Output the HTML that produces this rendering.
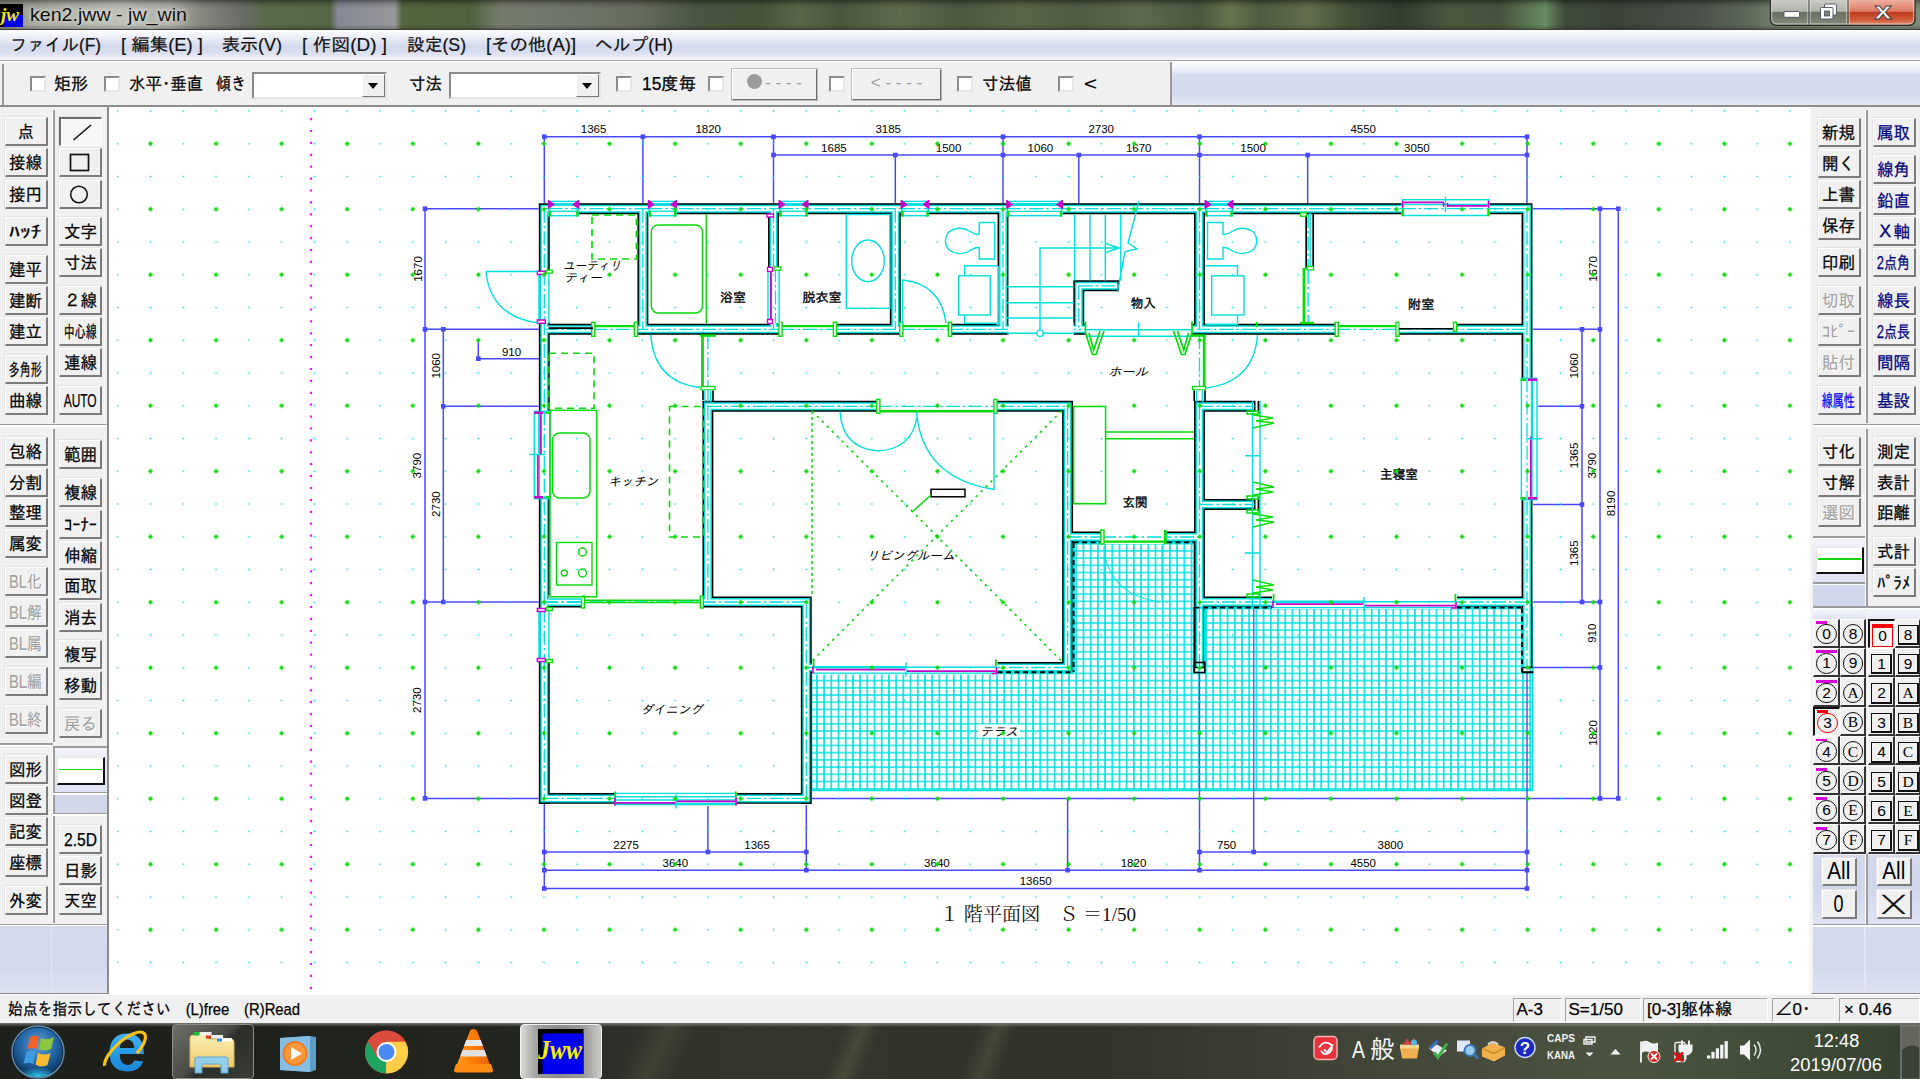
<!DOCTYPE html><html lang="ja"><head><meta charset="utf-8"><title>ken2.jww - jw_win</title><style>
*{box-sizing:border-box;margin:0;padding:0}
html,body{width:1920px;height:1079px;overflow:hidden;background:#fff}
body{position:relative;font-family:"Liberation Sans","IPAGothic","Noto Sans CJK JP",sans-serif;font-size:17px;color:#000}
.abs{position:absolute}
#title{left:0;top:0;width:1920px;height:30px;background:linear-gradient(90deg,#8e9187 0px,#a9aba2 40px,#bfc1b9 120px,#b0b2a9 170px,#85887f 200px,#6b6e69 240px,#596a4a 265px,#556846 330px,#868a96 338px,#96989a 395px,#54663f 402px,#506240 470px,#767c6c 500px,#70766a 560px,#666c5c 640px,#485540 700px,#46543a 760px,#59664a 800px,#4a573f 840px,#5e6a4e 900px,#4b5841 960px,#5a6649 1020px,#4f5b43 1080px,#5d694e 1140px,#495740 1200px,#68754f 1230px,#4e5c42 1260px,#636e4e 1310px,#435039 1350px,#323d2e 1400px,#4a5840 1450px,#46533d 1500px,#6a8a63 1545px,#3f4b3a 1565px,#3c4339 1620px,#4c524a 1700px,#5f6a5a 1750px,#6e7a66 1770px,#7f8c78 1920px)}
#title .shade{left:0;top:0;width:1920px;height:30px;background:linear-gradient(180deg,rgba(0,0,0,.42) 0%,rgba(0,0,0,.12) 14%,rgba(0,0,0,0) 30%,rgba(0,0,0,0) 82%,rgba(0,0,0,.25) 100%)}
#ttext{left:30px;top:2.5px;font-size:18.5px;line-height:24px;color:#10100f;white-space:nowrap;font-family:"Liberation Sans",sans-serif;text-shadow:0 0 6px rgba(255,255,255,.55),0 0 3px rgba(255,255,255,.5)}
#menu{left:0;top:30px;width:1920px;height:31px;background:linear-gradient(180deg,#fdfdfe 0%,#f4f5fb 14%,#dfe3f2 40%,#d3d9ec 55%,#d9deef 75%,#e8ebf5 90%,#f5f6fa 100%);border-bottom:1.5px solid #a0a0a0}
#menu span{position:absolute;top:2.5px;line-height:24px;font-size:17.5px;white-space:nowrap;color:#111;-webkit-text-stroke:.2px #111}
#ctrl{left:0;top:62px;width:1920px;height:45px;background:#f0f0f0;border-bottom:2px solid #8e8e8e}
#ctrl .lbl{position:absolute;top:11px;line-height:22px;font-size:17.5px;white-space:nowrap;-webkit-text-stroke:.25px #000}
.cb{position:absolute;width:16px;height:16px;top:14px;background:#fff;border:2px solid #8c8c8c;border-right-color:#e6e6e6;border-bottom-color:#e6e6e6}
.combo{position:absolute;top:10px;height:27px;background:#fff;border:2px solid #8a8a8a;border-right-color:#e4e4e4;border-bottom-color:#e4e4e4}
.combo i{position:absolute;right:0;top:0;width:23px;height:23px;background:#f0f0f0;border:1.5px solid #fff;border-right-color:#777;border-bottom-color:#777}
.combo i:after{content:"";position:absolute;left:5px;top:8px;border:5px solid transparent;border-top:6px solid #000;border-bottom:0}
.dbtn{position:absolute;top:7px;height:31px;background:#f0f0f0;border:1.5px solid #fff;border-right-color:#6d6d6d;border-bottom-color:#6d6d6d;box-shadow:0 0 0 1px #b9b9b9;color:#9a9a9a;font-size:17px;line-height:26px;text-align:center;white-space:nowrap}
.tb{position:absolute;background:#f0f0f0}
.b{position:absolute;width:43px;height:29px;background:#f0f0f0;border-top:1.5px solid #fff;border-left:1.5px solid #fff;border-right:2.5px solid #7b7b7b;border-bottom:2.5px solid #7b7b7b;font-size:17.5px;line-height:24px;padding-top:2px;display:flex;justify-content:center;align-items:center;white-space:nowrap;color:#000;overflow:hidden;box-shadow:-1px -1px 0 #e3e3e3;-webkit-text-stroke:.25px currentColor}
.f{display:inline-block;white-space:nowrap;transform-origin:0 50%}
.b .f{transform-origin:50% 50%}
.b.d{color:#a0a0a0;-webkit-text-stroke:.1px #a0a0a0;text-shadow:1px 1px 0 #fff}
.b.n{color:#00007c}
.b.bl{color:#0000f0}
.b.p{border-top:2.5px solid #6e6e6e;border-left:2.5px solid #6e6e6e;border-right:1.5px solid #fff;border-bottom:1.5px solid #fff;background:#f6f6f6}
.vsep{position:absolute;width:3px;background:linear-gradient(90deg,#fff 0,#fff 33%,#9c9c9c 33%,#9c9c9c 100%)}
.hsep{position:absolute;height:3px;background:linear-gradient(180deg,#9c9c9c 0,#9c9c9c 50%,#fff 50%,#fff 100%)}
.blue{position:absolute;background:linear-gradient(180deg,#d9def0 0%,#d0d6ea 60%,#dfe3f3 100%)}
#status{left:0;top:994px;width:1920px;height:29px;background:#f0f0f0;border-top:1.5px solid #fff}
#status span{position:absolute;top:4px;line-height:22px;font-size:17px;white-space:nowrap;-webkit-text-stroke:.25px #000}
#status .cell{position:absolute;top:3px;height:24px;border-left:1.5px solid #a5a5a5;border-top:1.5px solid #a5a5a5;border-right:1.5px solid #fff;border-bottom:1.5px solid #fff}
#task{left:0;top:1023px;width:1920px;height:56px;background:
 linear-gradient(115deg,rgba(90,95,70,0) 33%,rgba(90,95,70,.35) 34.5%,rgba(90,95,70,0) 36%),
 linear-gradient(112deg,rgba(95,100,72,0) 43.5%,rgba(95,100,72,.45) 44.5%,rgba(95,100,72,0) 45.5%),
 linear-gradient(110deg,rgba(95,100,72,0) 50.5%,rgba(95,100,72,.4) 51.5%,rgba(95,100,72,0) 52.5%),
 linear-gradient(90deg,#1e201b 0%,#1f211c 14%,#252721 28%,#2f322a 33%,#33372d 40%,#30342b 50%,#31352c 58%,#3b3f33 66%,#42473a 72%,#484d3d 78%,#4b5440 84%,#44503a 90%,#3b4733 96%,#36402f 100%);border-top:1.5px solid #6a6c66}
</style></head><body><div class="abs" style="left:109px;top:108px;width:1702px;height:886px;background:#fff"></div><svg class="abs" style="left:0;top:0" width="1920" height="1079" viewBox="0 0 1920 1079" font-family="Liberation Sans,sans-serif"><defs><pattern id="ht" x="542.2" y="211.4" width="7.205" height="7.205" patternUnits="userSpaceOnUse"><path d="M0 0.9H7.3M0.9 0V7.3" stroke="#00dede" stroke-width="1.55" fill="none"/></pattern></defs><path d="M1073 542.5 L1194 542.5 L1194 607.5 L1532.6 607.5 L1532.6 790.4 L811.5 790.4 L811.5 672.5 L1073 672.5Z" fill="url(#ht)" stroke="#00dede" stroke-width="1.6"/><line x1="544.3" y1="136.7" x2="1527" y2="136.7" stroke="#4848ff" stroke-width="1.5"/><line x1="773.5" y1="155" x2="1527" y2="155" stroke="#4848ff" stroke-width="1.5"/><line x1="544.3" y1="136.7" x2="544.3" y2="203" stroke="#4848ff" stroke-width="1.5"/><rect x="542" y="134.4" width="4.6" height="4.6" fill="#4848ff"/><line x1="642.9" y1="136.7" x2="642.9" y2="203" stroke="#4848ff" stroke-width="1.5"/><rect x="640.6" y="134.4" width="4.6" height="4.6" fill="#4848ff"/><line x1="773.5" y1="136.7" x2="773.5" y2="203" stroke="#4848ff" stroke-width="1.5"/><rect x="771.2" y="134.4" width="4.6" height="4.6" fill="#4848ff"/><line x1="1003" y1="136.7" x2="1003" y2="203" stroke="#4848ff" stroke-width="1.5"/><rect x="1000.7" y="134.4" width="4.6" height="4.6" fill="#4848ff"/><line x1="1199.5" y1="136.7" x2="1199.5" y2="203" stroke="#4848ff" stroke-width="1.5"/><rect x="1197.2" y="134.4" width="4.6" height="4.6" fill="#4848ff"/><line x1="1527" y1="136.7" x2="1527" y2="203" stroke="#4848ff" stroke-width="1.5"/><rect x="1524.7" y="134.4" width="4.6" height="4.6" fill="#4848ff"/><rect x="771.2" y="152.7" width="4.6" height="4.6" fill="#4848ff"/><line x1="895.3" y1="155" x2="895.3" y2="203" stroke="#4848ff" stroke-width="1.5"/><rect x="893" y="152.7" width="4.6" height="4.6" fill="#4848ff"/><rect x="1000.7" y="152.7" width="4.6" height="4.6" fill="#4848ff"/><line x1="1078.8" y1="155" x2="1078.8" y2="203" stroke="#4848ff" stroke-width="1.5"/><rect x="1076.5" y="152.7" width="4.6" height="4.6" fill="#4848ff"/><rect x="1197.2" y="152.7" width="4.6" height="4.6" fill="#4848ff"/><line x1="1307.7" y1="155" x2="1307.7" y2="203" stroke="#4848ff" stroke-width="1.5"/><rect x="1305.4" y="152.7" width="4.6" height="4.6" fill="#4848ff"/><rect x="1524.7" y="152.7" width="4.6" height="4.6" fill="#4848ff"/><text x="593.6" y="133.2" font-size="11.5" text-anchor="middle" font-family="Liberation Sans,IPAGothic,sans-serif" fill="#000">1365</text><text x="708.2" y="133.2" font-size="11.5" text-anchor="middle" font-family="Liberation Sans,IPAGothic,sans-serif" fill="#000">1820</text><text x="888.2" y="133.2" font-size="11.5" text-anchor="middle" font-family="Liberation Sans,IPAGothic,sans-serif" fill="#000">3185</text><text x="1101.2" y="133.2" font-size="11.5" text-anchor="middle" font-family="Liberation Sans,IPAGothic,sans-serif" fill="#000">2730</text><text x="1363.2" y="133.2" font-size="11.5" text-anchor="middle" font-family="Liberation Sans,IPAGothic,sans-serif" fill="#000">4550</text><text x="833.9" y="151.5" font-size="11.5" text-anchor="middle" font-family="Liberation Sans,IPAGothic,sans-serif" fill="#000">1685</text><text x="948.6" y="151.5" font-size="11.5" text-anchor="middle" font-family="Liberation Sans,IPAGothic,sans-serif" fill="#000">1500</text><text x="1040.4" y="151.5" font-size="11.5" text-anchor="middle" font-family="Liberation Sans,IPAGothic,sans-serif" fill="#000">1060</text><text x="1138.7" y="151.5" font-size="11.5" text-anchor="middle" font-family="Liberation Sans,IPAGothic,sans-serif" fill="#000">1670</text><text x="1253.1" y="151.5" font-size="11.5" text-anchor="middle" font-family="Liberation Sans,IPAGothic,sans-serif" fill="#000">1500</text><text x="1416.9" y="151.5" font-size="11.5" text-anchor="middle" font-family="Liberation Sans,IPAGothic,sans-serif" fill="#000">3050</text><line x1="425" y1="208.7" x2="425" y2="798.4" stroke="#4848ff" stroke-width="1.5"/><line x1="443.3" y1="329.3" x2="443.3" y2="602" stroke="#4848ff" stroke-width="1.5"/><line x1="425" y1="208.7" x2="538.5" y2="208.7" stroke="#4848ff" stroke-width="1.5"/><rect x="422.7" y="206.4" width="4.6" height="4.6" fill="#4848ff"/><line x1="425" y1="329.3" x2="538.5" y2="329.3" stroke="#4848ff" stroke-width="1.5"/><rect x="422.7" y="327" width="4.6" height="4.6" fill="#4848ff"/><line x1="425" y1="602" x2="538.5" y2="602" stroke="#4848ff" stroke-width="1.5"/><rect x="422.7" y="599.7" width="4.6" height="4.6" fill="#4848ff"/><line x1="425" y1="798.4" x2="538.5" y2="798.4" stroke="#4848ff" stroke-width="1.5"/><rect x="422.7" y="796.1" width="4.6" height="4.6" fill="#4848ff"/><line x1="443.3" y1="406.3" x2="538.5" y2="406.3" stroke="#4848ff" stroke-width="1.5"/><rect x="441" y="327" width="4.6" height="4.6" fill="#4848ff"/><rect x="441" y="404" width="4.6" height="4.6" fill="#4848ff"/><rect x="441" y="599.7" width="4.6" height="4.6" fill="#4848ff"/><text x="421.5" y="269" font-size="11.5" text-anchor="middle" font-family="Liberation Sans,IPAGothic,sans-serif" transform="rotate(-90 421.5 269)" fill="#000">1670</text><text x="421.5" y="465.6" font-size="11.5" text-anchor="middle" font-family="Liberation Sans,IPAGothic,sans-serif" transform="rotate(-90 421.5 465.6)" fill="#000">3790</text><text x="421.5" y="700.2" font-size="11.5" text-anchor="middle" font-family="Liberation Sans,IPAGothic,sans-serif" transform="rotate(-90 421.5 700.2)" fill="#000">2730</text><text x="439.8" y="365.8" font-size="11.5" text-anchor="middle" font-family="Liberation Sans,IPAGothic,sans-serif" transform="rotate(-90 439.8 365.8)" fill="#000">1060</text><text x="439.8" y="504.1" font-size="11.5" text-anchor="middle" font-family="Liberation Sans,IPAGothic,sans-serif" transform="rotate(-90 439.8 504.1)" fill="#000">2730</text><line x1="478.3" y1="341" x2="478.3" y2="358.7" stroke="#4848ff" stroke-width="1.5"/><line x1="478.3" y1="358.7" x2="545" y2="358.7" stroke="#4848ff" stroke-width="1.5"/><rect x="476" y="356.4" width="4.6" height="4.6" fill="#4848ff"/><rect x="542.2" y="356.4" width="4.6" height="4.6" fill="#4848ff"/><text x="511.5" y="355.6" font-size="11.5" text-anchor="middle" font-family="Liberation Sans,IPAGothic,sans-serif" fill="#000">910</text><line x1="1582" y1="329.3" x2="1582" y2="602" stroke="#4848ff" stroke-width="1.5"/><line x1="1600" y1="208.7" x2="1600" y2="798.4" stroke="#4848ff" stroke-width="1.5"/><line x1="1618.3" y1="208.7" x2="1618.3" y2="798.4" stroke="#4848ff" stroke-width="1.5"/><line x1="1533" y1="208.7" x2="1618.3" y2="208.7" stroke="#4848ff" stroke-width="1.5"/><rect x="1597.7" y="206.4" width="4.6" height="4.6" fill="#4848ff"/><rect x="1616" y="206.4" width="4.6" height="4.6" fill="#4848ff"/><line x1="1533" y1="329.3" x2="1600" y2="329.3" stroke="#4848ff" stroke-width="1.5"/><rect x="1579.7" y="327" width="4.6" height="4.6" fill="#4848ff"/><rect x="1597.7" y="327" width="4.6" height="4.6" fill="#4848ff"/><line x1="1538" y1="406.3" x2="1582" y2="406.3" stroke="#4848ff" stroke-width="1.5"/><rect x="1579.7" y="404" width="4.6" height="4.6" fill="#4848ff"/><line x1="1533" y1="504.5" x2="1582" y2="504.5" stroke="#4848ff" stroke-width="1.5"/><rect x="1579.7" y="502.2" width="4.6" height="4.6" fill="#4848ff"/><line x1="1533" y1="602" x2="1600" y2="602" stroke="#4848ff" stroke-width="1.5"/><rect x="1579.7" y="599.7" width="4.6" height="4.6" fill="#4848ff"/><rect x="1597.7" y="599.7" width="4.6" height="4.6" fill="#4848ff"/><line x1="1533" y1="667.5" x2="1600" y2="667.5" stroke="#4848ff" stroke-width="1.5"/><rect x="1597.7" y="665.2" width="4.6" height="4.6" fill="#4848ff"/><line x1="1533" y1="798.4" x2="1618.3" y2="798.4" stroke="#4848ff" stroke-width="1.5"/><rect x="1597.7" y="796.1" width="4.6" height="4.6" fill="#4848ff"/><rect x="1616" y="796.1" width="4.6" height="4.6" fill="#4848ff"/><text x="1578.5" y="365.8" font-size="11.5" text-anchor="middle" font-family="Liberation Sans,IPAGothic,sans-serif" transform="rotate(-90 1578.5 365.8)" fill="#000">1060</text><text x="1578.5" y="455.4" font-size="11.5" text-anchor="middle" font-family="Liberation Sans,IPAGothic,sans-serif" transform="rotate(-90 1578.5 455.4)" fill="#000">1365</text><text x="1578.5" y="553.2" font-size="11.5" text-anchor="middle" font-family="Liberation Sans,IPAGothic,sans-serif" transform="rotate(-90 1578.5 553.2)" fill="#000">1365</text><text x="1596.5" y="269" font-size="11.5" text-anchor="middle" font-family="Liberation Sans,IPAGothic,sans-serif" transform="rotate(-90 1596.5 269)" fill="#000">1670</text><text x="1596.5" y="465.6" font-size="11.5" text-anchor="middle" font-family="Liberation Sans,IPAGothic,sans-serif" transform="rotate(-90 1596.5 465.6)" fill="#000">3790</text><text x="1596.5" y="633.2" font-size="11.5" text-anchor="middle" font-family="Liberation Sans,IPAGothic,sans-serif" transform="rotate(-90 1596.5 633.2)" fill="#000">910</text><text x="1596.5" y="733" font-size="11.5" text-anchor="middle" font-family="Liberation Sans,IPAGothic,sans-serif" transform="rotate(-90 1596.5 733)" fill="#000">1820</text><text x="1614.8" y="503.5" font-size="11.5" text-anchor="middle" font-family="Liberation Sans,IPAGothic,sans-serif" transform="rotate(-90 1614.8 503.5)" fill="#000">8190</text><line x1="544.3" y1="852" x2="806.3" y2="852" stroke="#4848ff" stroke-width="1.5"/><line x1="1199.5" y1="852" x2="1527" y2="852" stroke="#4848ff" stroke-width="1.5"/><line x1="544.3" y1="870.2" x2="1527" y2="870.2" stroke="#4848ff" stroke-width="1.5"/><line x1="544.3" y1="888.5" x2="1527" y2="888.5" stroke="#4848ff" stroke-width="1.5"/><line x1="544.3" y1="804" x2="544.3" y2="888.5" stroke="#4848ff" stroke-width="1.5"/><line x1="1527" y1="798" x2="1527" y2="888.5" stroke="#4848ff" stroke-width="1.5"/><line x1="707.9" y1="806" x2="707.9" y2="852" stroke="#4848ff" stroke-width="1.5"/><line x1="806.3" y1="805" x2="806.3" y2="870.2" stroke="#4848ff" stroke-width="1.5"/><line x1="1067.6" y1="798" x2="1067.6" y2="870.2" stroke="#4848ff" stroke-width="1.5"/><line x1="1199.5" y1="798" x2="1199.5" y2="870.2" stroke="#4848ff" stroke-width="1.5"/><line x1="1253.7" y1="798" x2="1253.7" y2="852" stroke="#4848ff" stroke-width="1.5"/><line x1="812" y1="798.4" x2="1533" y2="798.4" stroke="#4848ff" stroke-width="1.5"/><rect x="542" y="849.7" width="4.6" height="4.6" fill="#4848ff"/><rect x="705.6" y="849.7" width="4.6" height="4.6" fill="#4848ff"/><rect x="804" y="849.7" width="4.6" height="4.6" fill="#4848ff"/><rect x="1197.2" y="849.7" width="4.6" height="4.6" fill="#4848ff"/><rect x="1251.4" y="849.7" width="4.6" height="4.6" fill="#4848ff"/><rect x="1524.7" y="849.7" width="4.6" height="4.6" fill="#4848ff"/><rect x="542" y="867.9" width="4.6" height="4.6" fill="#4848ff"/><rect x="804" y="867.9" width="4.6" height="4.6" fill="#4848ff"/><rect x="1065.3" y="867.9" width="4.6" height="4.6" fill="#4848ff"/><rect x="1197.2" y="867.9" width="4.6" height="4.6" fill="#4848ff"/><rect x="1524.7" y="867.9" width="4.6" height="4.6" fill="#4848ff"/><rect x="542" y="886.2" width="4.6" height="4.6" fill="#4848ff"/><rect x="1524.7" y="886.2" width="4.6" height="4.6" fill="#4848ff"/><text x="626.1" y="848.5" font-size="11.5" text-anchor="middle" font-family="Liberation Sans,IPAGothic,sans-serif" fill="#000">2275</text><text x="757.1" y="848.5" font-size="11.5" text-anchor="middle" font-family="Liberation Sans,IPAGothic,sans-serif" fill="#000">1365</text><text x="1226.6" y="848.5" font-size="11.5" text-anchor="middle" font-family="Liberation Sans,IPAGothic,sans-serif" fill="#000">750</text><text x="1390.3" y="848.5" font-size="11.5" text-anchor="middle" font-family="Liberation Sans,IPAGothic,sans-serif" fill="#000">3800</text><text x="675.3" y="866.7" font-size="11.5" text-anchor="middle" font-family="Liberation Sans,IPAGothic,sans-serif" fill="#000">3640</text><text x="936.9" y="866.7" font-size="11.5" text-anchor="middle" font-family="Liberation Sans,IPAGothic,sans-serif" fill="#000">3640</text><text x="1133.5" y="866.7" font-size="11.5" text-anchor="middle" font-family="Liberation Sans,IPAGothic,sans-serif" fill="#000">1820</text><text x="1363.2" y="866.7" font-size="11.5" text-anchor="middle" font-family="Liberation Sans,IPAGothic,sans-serif" fill="#000">4550</text><text x="1035.7" y="885" font-size="11.5" text-anchor="middle" font-family="Liberation Sans,IPAGothic,sans-serif" fill="#000">13650</text><line x1="1199.5" y1="672" x2="1199.5" y2="798" stroke="#4848ff" stroke-width="1.4"/><line x1="1253.7" y1="607" x2="1253.7" y2="798" stroke="#5a5aff" stroke-width="1.4"/><line x1="1527" y1="672" x2="1527" y2="798" stroke="#4848ff" stroke-width="1.4"/><path d="M538.8 208.7H1532.5M544.3 203.2V803.9M538.8 798.4H811.7M806.3 803.9V596.5M800.8 667.5H1073M1067.6 673V400.9M1527 203.2V668.3M1062.1 537H1205M1194 602H1532.5M538.8 329.3H1532.5M642.9 203.2V334.8M773.5 203.2V334.8M895.3 203.2V334.8M1003 203.2V334.8M1199.5 203.2V334.8M1078.8 280.4V334.8M1073.3 285.8H1119M702.5 406.3H1073M707.9 400.9V607.5M538.8 602H811.7M1199.5 400.9V668.3M1194 406.3H1255.5M1194 504.5H1255.5" stroke="#000" stroke-width="10.9" fill="none"/><path d="M540.3 208.7H1531M544.3 204.7V802.4M540.3 798.4H810.3M806.3 802.4V598M802.3 667.5H1071.6M1067.6 671.5V402.3M1527 204.7V666.7M1063.6 537H1203.5M1195.5 602H1531M540.3 329.3H1531M642.9 204.7V333.3M773.5 204.7V333.3M895.3 204.7V333.3M1003 204.7V333.3M1199.5 204.7V333.3M1078.8 281.8V333.3M1074.8 285.8H1117.4M703.9 406.3H1071.6M707.9 402.3V606M540.3 602H810.3M1199.5 402.3V666.7M1195.5 406.3H1253.9M1195.5 504.5H1253.9" stroke="#00dede" stroke-width="8" fill="none"/><path d="M541.8 208.7H1529.5M544.3 206.2V800.9M541.8 798.4H808.8M806.3 800.9V599.5M803.8 667.5H1070.1M1067.6 670V403.8M1527 206.2V666.7M1065.1 537H1202M1197 602H1529.5M541.8 329.3H1529.5M642.9 206.2V331.8M773.5 206.2V331.8M895.3 206.2V331.8M1003 206.2V331.8M1199.5 206.2V331.8M1078.8 283.3V331.8M1076.3 285.8H1117.4M705.4 406.3H1070.1M707.9 403.8V604.5M541.8 602H808.8M1199.5 403.8V666.7M1197 406.3H1253.9M1197 504.5H1253.9" stroke="#fff" stroke-width="5" fill="none"/><path d="M544.3 208.7L1527 208.7M544.3 208.7L544.3 798.4M544.3 798.4L806.3 798.4M806.3 798.4L806.3 602M806.3 667.5L1067.6 667.5M1067.6 667.5L1067.6 406.3M1527 208.7L1527 667.5M1067.6 537L1199.5 537M1199.5 602L1527 602M544.3 329.3L1527 329.3M642.9 208.7L642.9 329.3M773.5 208.7L773.5 329.3M895.3 208.7L895.3 329.3M1003 208.7L1003 329.3M1199.5 208.7L1199.5 329.3M1078.8 285.8L1078.8 329.3M1078.8 285.8L1118.2 285.8M707.9 406.3L1067.6 406.3M707.9 406.3L707.9 602M544.3 602L806.3 602M1199.5 406.3L1199.5 667.5M1199.5 406.3L1254.7 406.3M1199.5 504.5L1254.7 504.5" stroke="#00dede" stroke-width="1.3" fill="none" stroke-dasharray="14 3 2.5 3"/><line x1="1308.2" y1="214.1" x2="1308.2" y2="268" stroke="#00dede" stroke-width="1.3" stroke-dasharray="14 3 2.5 3"/><line x1="1306.2" y1="213.7" x2="1306.2" y2="268.5" stroke="#000" stroke-width="1.7"/><line x1="1313.2" y1="213.7" x2="1313.2" y2="268.5" stroke="#000" stroke-width="1.7"/><line x1="1310.2" y1="212.7" x2="1310.2" y2="268" stroke="#00dede" stroke-width="1.3"/><rect x="1307" y="266.5" width="6.5" height="3.4" fill="#fff" stroke="#08dc08" stroke-width="1.3"/><rect x="1300.5" y="212.8" width="6" height="3.4" fill="#fff" stroke="#08dc08" stroke-width="1.3"/><line x1="1304" y1="268" x2="1304" y2="323.5" stroke="#08dc08" stroke-width="2.8"/><line x1="1308.2" y1="270" x2="1308.2" y2="324" stroke="#00dede" stroke-width="1.3" stroke-dasharray="14 3 2.5 3"/><line x1="1300" y1="323" x2="1314" y2="323" stroke="#08dc08" stroke-width="2.4"/><rect x="548.3" y="201.1" width="30.5" height="15.2" fill="#fff"/><rect x="549" y="201.4" width="29.1" height="14.3" fill="none" stroke="#00dede" stroke-width="1.4"/><line x1="552.3" y1="204.5" x2="574.8" y2="204.5" stroke="#00dede" stroke-width="2.8"/><line x1="548.3" y1="208.7" x2="578.8" y2="208.7" stroke="#00dede" stroke-width="1.3" stroke-dasharray="14 3 2.5 3"/><line x1="548.3" y1="211.3" x2="578.8" y2="211.3" stroke="#00dede" stroke-width="1.3"/><path d="M548.3 200.1V208.5L554.3 204.5Z" stroke="#cc00cc" stroke-width="1" fill="#cc00cc"/><line x1="549.9" y1="210.7" x2="549.9" y2="216.7" stroke="#08dc08" stroke-width="2.2"/><path d="M578.8 200.1V208.5L572.8 204.5Z" stroke="#cc00cc" stroke-width="1" fill="#cc00cc"/><line x1="577.2" y1="210.7" x2="577.2" y2="216.7" stroke="#08dc08" stroke-width="2.2"/><rect x="648.3" y="201.1" width="28.4" height="15.2" fill="#fff"/><rect x="649" y="201.4" width="27" height="14.3" fill="none" stroke="#00dede" stroke-width="1.4"/><line x1="652.3" y1="204.5" x2="672.7" y2="204.5" stroke="#00dede" stroke-width="2.8"/><line x1="648.3" y1="208.7" x2="676.7" y2="208.7" stroke="#00dede" stroke-width="1.3" stroke-dasharray="14 3 2.5 3"/><line x1="648.3" y1="211.3" x2="676.7" y2="211.3" stroke="#00dede" stroke-width="1.3"/><path d="M648.3 200.1V208.5L654.3 204.5Z" stroke="#cc00cc" stroke-width="1" fill="#cc00cc"/><line x1="649.9" y1="210.7" x2="649.9" y2="216.7" stroke="#08dc08" stroke-width="2.2"/><path d="M676.7 200.1V208.5L670.7 204.5Z" stroke="#cc00cc" stroke-width="1" fill="#cc00cc"/><line x1="675.1" y1="210.7" x2="675.1" y2="216.7" stroke="#08dc08" stroke-width="2.2"/><rect x="779" y="201.1" width="29" height="15.2" fill="#fff"/><rect x="779.7" y="201.4" width="27.6" height="14.3" fill="none" stroke="#00dede" stroke-width="1.4"/><line x1="783" y1="204.5" x2="804" y2="204.5" stroke="#00dede" stroke-width="2.8"/><line x1="779" y1="208.7" x2="808" y2="208.7" stroke="#00dede" stroke-width="1.3" stroke-dasharray="14 3 2.5 3"/><line x1="779" y1="211.3" x2="808" y2="211.3" stroke="#00dede" stroke-width="1.3"/><path d="M779 200.1V208.5L785 204.5Z" stroke="#cc00cc" stroke-width="1" fill="#cc00cc"/><line x1="780.6" y1="210.7" x2="780.6" y2="216.7" stroke="#08dc08" stroke-width="2.2"/><path d="M808 200.1V208.5L802 204.5Z" stroke="#cc00cc" stroke-width="1" fill="#cc00cc"/><line x1="806.4" y1="210.7" x2="806.4" y2="216.7" stroke="#08dc08" stroke-width="2.2"/><rect x="901" y="201.1" width="28" height="15.2" fill="#fff"/><rect x="901.7" y="201.4" width="26.6" height="14.3" fill="none" stroke="#00dede" stroke-width="1.4"/><line x1="905" y1="204.5" x2="925" y2="204.5" stroke="#00dede" stroke-width="2.8"/><line x1="901" y1="208.7" x2="929" y2="208.7" stroke="#00dede" stroke-width="1.3" stroke-dasharray="14 3 2.5 3"/><line x1="901" y1="211.3" x2="929" y2="211.3" stroke="#00dede" stroke-width="1.3"/><path d="M901 200.1V208.5L907 204.5Z" stroke="#cc00cc" stroke-width="1" fill="#cc00cc"/><line x1="902.6" y1="210.7" x2="902.6" y2="216.7" stroke="#08dc08" stroke-width="2.2"/><path d="M929 200.1V208.5L923 204.5Z" stroke="#cc00cc" stroke-width="1" fill="#cc00cc"/><line x1="927.4" y1="210.7" x2="927.4" y2="216.7" stroke="#08dc08" stroke-width="2.2"/><rect x="1006.7" y="201.1" width="55.8" height="15.2" fill="#fff"/><rect x="1007.4" y="201.4" width="54.4" height="14.3" fill="none" stroke="#00dede" stroke-width="1.4"/><line x1="1010.7" y1="204.5" x2="1058.5" y2="204.5" stroke="#00dede" stroke-width="2.8"/><line x1="1006.7" y1="208.7" x2="1062.5" y2="208.7" stroke="#00dede" stroke-width="1.3" stroke-dasharray="14 3 2.5 3"/><line x1="1006.7" y1="211.3" x2="1062.5" y2="211.3" stroke="#00dede" stroke-width="1.3"/><path d="M1006.7 200.1V208.5L1012.7 204.5Z" stroke="#cc00cc" stroke-width="1" fill="#cc00cc"/><line x1="1008.3" y1="210.7" x2="1008.3" y2="216.7" stroke="#08dc08" stroke-width="2.2"/><path d="M1062.5 200.1V208.5L1056.5 204.5Z" stroke="#cc00cc" stroke-width="1" fill="#cc00cc"/><line x1="1060.9" y1="210.7" x2="1060.9" y2="216.7" stroke="#08dc08" stroke-width="2.2"/><rect x="1205" y="201.1" width="28" height="15.2" fill="#fff"/><rect x="1205.7" y="201.4" width="26.6" height="14.3" fill="none" stroke="#00dede" stroke-width="1.4"/><line x1="1209" y1="204.5" x2="1229" y2="204.5" stroke="#00dede" stroke-width="2.8"/><line x1="1205" y1="208.7" x2="1233" y2="208.7" stroke="#00dede" stroke-width="1.3" stroke-dasharray="14 3 2.5 3"/><line x1="1205" y1="211.3" x2="1233" y2="211.3" stroke="#00dede" stroke-width="1.3"/><path d="M1205 200.1V208.5L1211 204.5Z" stroke="#cc00cc" stroke-width="1" fill="#cc00cc"/><line x1="1206.6" y1="210.7" x2="1206.6" y2="216.7" stroke="#08dc08" stroke-width="2.2"/><path d="M1233 200.1V208.5L1227 204.5Z" stroke="#cc00cc" stroke-width="1" fill="#cc00cc"/><line x1="1231.4" y1="210.7" x2="1231.4" y2="216.7" stroke="#08dc08" stroke-width="2.2"/><rect x="1401.7" y="199.7" width="87.8" height="16.6" fill="#fff"/><rect x="1402.4" y="199.7" width="86.4" height="15.8" fill="none" stroke="#00dede" stroke-width="1.4"/><line x1="1401.7" y1="204.5" x2="1489.5" y2="204.5" stroke="#00dede" stroke-width="1.4"/><line x1="1401.7" y1="208.7" x2="1489.5" y2="208.7" stroke="#00dede" stroke-width="1.3" stroke-dasharray="14 3 2.5 3"/><line x1="1403.7" y1="202.3" x2="1444" y2="202.3" stroke="#cc00cc" stroke-width="1.8"/><line x1="1447" y1="205.9" x2="1487.5" y2="205.9" stroke="#cc00cc" stroke-width="1.8"/><line x1="1445.4" y1="196.7" x2="1445.4" y2="212.2" stroke="#00dede" stroke-width="1.4"/><path d="M1402.7 200.7v7M1488.5 200.7v7M1443.5 202.7v4M1447.5 202.7v4" stroke="#cc00cc" stroke-width="1.6" fill="none"/><line x1="1402.9" y1="208.7" x2="1402.9" y2="216.2" stroke="#08dc08" stroke-width="2"/><line x1="1488.3" y1="208.7" x2="1488.3" y2="216.2" stroke="#08dc08" stroke-width="2"/><rect x="537.3" y="271.5" width="14" height="51.5" fill="#fff"/><line x1="539.7" y1="271.5" x2="539.7" y2="323" stroke="#00dede" stroke-width="2.8"/><line x1="544.3" y1="271.5" x2="544.3" y2="323" stroke="#00dede" stroke-width="1.3" stroke-dasharray="14 3 2.5 3"/><line x1="548.9" y1="271.5" x2="548.9" y2="323" stroke="#00dede" stroke-width="1.4"/><path d="M537.3 271.3h8v3.2h-8zM537.3 320h8v3.2h-8z" stroke="#cc00cc" stroke-width="1.4" fill="#fff"/><path d="M546.3 270.2h6v3h-6z" stroke="#08dc08" stroke-width="1.3" fill="#fff"/><path d="M486 271.5H538M486 271.5Q490 316 538 322.8" stroke="#00dede" stroke-width="1.4" fill="none"/><rect x="537.8" y="411.3" width="13" height="87.4" fill="#fff"/><rect x="534.3" y="411.3" width="15.6" height="87.4" fill="none" stroke="#00dede" stroke-width="1.4"/><line x1="544.3" y1="411.3" x2="544.3" y2="498.7" stroke="#00dede" stroke-width="1.3" stroke-dasharray="14 3 2.5 3"/><line x1="539.3" y1="411.3" x2="539.3" y2="454.5" stroke="#00dede" stroke-width="2.4"/><line x1="539.3" y1="454.5" x2="539.3" y2="498.7" stroke="#00dede" stroke-width="1.3"/><line x1="540.9" y1="413.3" x2="540.9" y2="454.5" stroke="#cc00cc" stroke-width="1.7"/><line x1="537.9" y1="454.5" x2="537.9" y2="496.7" stroke="#cc00cc" stroke-width="1.7"/><line x1="529.3" y1="454.5" x2="545.3" y2="454.5" stroke="#00dede" stroke-width="1.4"/><path d="M534.3 412.8h9M534.3 497.2h9" stroke="#cc00cc" stroke-width="2.6" fill="none"/><line x1="545.3" y1="412.8" x2="550.8" y2="412.8" stroke="#08dc08" stroke-width="2.4"/><line x1="545.3" y1="497.2" x2="550.8" y2="497.2" stroke="#08dc08" stroke-width="2.4"/><rect x="537.3" y="608.5" width="14" height="53" fill="#fff"/><line x1="539.7" y1="608.5" x2="539.7" y2="661.5" stroke="#00dede" stroke-width="2.8"/><line x1="544.3" y1="608.5" x2="544.3" y2="661.5" stroke="#00dede" stroke-width="1.3" stroke-dasharray="14 3 2.5 3"/><line x1="548.9" y1="608.5" x2="548.9" y2="661.5" stroke="#00dede" stroke-width="1.4"/><path d="M537.3 608.5h8v3h-8zM537.3 658.5h8v3h-8z" stroke="#cc00cc" stroke-width="1.4" fill="#fff"/><path d="M546.3 607.5h6v3h-6zM546.3 659.5h6v3h-6z" stroke="#08dc08" stroke-width="1.3" fill="#fff"/><rect x="614" y="791.4" width="123" height="14.5" fill="#fff"/><line x1="614" y1="793.4" x2="737" y2="793.4" stroke="#00dede" stroke-width="1.4"/><line x1="614" y1="796.8" x2="737" y2="796.8" stroke="#00dede" stroke-width="1.4"/><line x1="614" y1="800" x2="737" y2="800" stroke="#00dede" stroke-width="1.4"/><line x1="614" y1="804" x2="737" y2="804" stroke="#00dede" stroke-width="2.6"/><line x1="616" y1="802.8" x2="676" y2="802.8" stroke="#cc00cc" stroke-width="1.8"/><line x1="676" y1="801.4" x2="735" y2="801.4" stroke="#cc00cc" stroke-width="1.8"/><line x1="676" y1="794.4" x2="676" y2="808.4" stroke="#00dede" stroke-width="1.4"/><path d="M615 797.4v8M736 797.4v8" stroke="#cc00cc" stroke-width="1.8" fill="none"/><line x1="615.2" y1="791.4" x2="615.2" y2="797.4" stroke="#08dc08" stroke-width="1.8"/><line x1="735.8" y1="791.4" x2="735.8" y2="797.4" stroke="#08dc08" stroke-width="1.8"/><rect x="812" y="660.5" width="185.5" height="14" fill="#fff"/><line x1="812" y1="667.2" x2="906" y2="667.2" stroke="#00dede" stroke-width="2.6"/><line x1="906" y1="667.2" x2="997.5" y2="667.2" stroke="#00dede" stroke-width="1.4"/><line x1="812" y1="673.1" x2="997.5" y2="673.1" stroke="#00dede" stroke-width="1.4"/><line x1="816" y1="669.7" x2="905" y2="669.7" stroke="#cc00cc" stroke-width="1.8"/><line x1="907" y1="671.1" x2="996.5" y2="671.1" stroke="#cc00cc" stroke-width="1.8"/><line x1="906" y1="662.5" x2="906" y2="676.5" stroke="#00dede" stroke-width="1.4"/><path d="M813 666.5v7M996.5 667.5v6h-5" stroke="#cc00cc" stroke-width="1.6" fill="none"/><line x1="813.6" y1="666.5" x2="813.6" y2="659.5" stroke="#08dc08" stroke-width="1.8"/><line x1="995.9" y1="666.5" x2="995.9" y2="659.5" stroke="#08dc08" stroke-width="1.8"/><rect x="1272" y="595" width="185" height="14" fill="#fff"/><line x1="1272" y1="601.7" x2="1364" y2="601.7" stroke="#00dede" stroke-width="2.6"/><line x1="1364" y1="601.7" x2="1457" y2="601.7" stroke="#00dede" stroke-width="1.4"/><line x1="1272" y1="607.6" x2="1457" y2="607.6" stroke="#00dede" stroke-width="1.4"/><line x1="1276" y1="604.2" x2="1363" y2="604.2" stroke="#cc00cc" stroke-width="1.8"/><line x1="1365" y1="605.6" x2="1456" y2="605.6" stroke="#cc00cc" stroke-width="1.8"/><line x1="1364" y1="597" x2="1364" y2="611" stroke="#00dede" stroke-width="1.4"/><path d="M1273 601v7M1456 602v6h-5" stroke="#cc00cc" stroke-width="1.6" fill="none"/><line x1="1273.6" y1="601" x2="1273.6" y2="594" stroke="#08dc08" stroke-width="1.8"/><line x1="1455.4" y1="601" x2="1455.4" y2="594" stroke="#08dc08" stroke-width="1.8"/><rect x="1520.5" y="378.3" width="13" height="121.4" fill="#fff"/><rect x="1521.4" y="378.3" width="15.6" height="121.4" fill="none" stroke="#00dede" stroke-width="1.4"/><line x1="1527" y1="378.3" x2="1527" y2="499.7" stroke="#00dede" stroke-width="1.3" stroke-dasharray="14 3 2.5 3"/><line x1="1532" y1="378.3" x2="1532" y2="438.8" stroke="#00dede" stroke-width="2.4"/><line x1="1532" y1="438.8" x2="1532" y2="499.7" stroke="#00dede" stroke-width="1.3"/><line x1="1530.8" y1="436.8" x2="1530.8" y2="497.7" stroke="#cc00cc" stroke-width="1.8"/><line x1="1542" y1="438.8" x2="1526" y2="438.8" stroke="#00dede" stroke-width="1.4"/><path d="M1537 379.8h-9M1537 498.2h-9" stroke="#cc00cc" stroke-width="2.6" fill="none"/><line x1="1526" y1="379.8" x2="1520.5" y2="379.8" stroke="#08dc08" stroke-width="2.4"/><line x1="1526" y1="498.2" x2="1520.5" y2="498.2" stroke="#08dc08" stroke-width="2.4"/><rect x="593.3" y="322.3" width="42.7" height="14" fill="#fff"/><line x1="593.3" y1="329.3" x2="636" y2="329.3" stroke="#00dede" stroke-width="1.3" stroke-dasharray="14 3 2.5 3"/><line x1="593.3" y1="326.1" x2="636" y2="326.1" stroke="#08dc08" stroke-width="2.4"/><rect x="591.7" y="322.3" width="3.2" height="14" fill="#fff" stroke="#08dc08" stroke-width="1.4"/><rect x="634.4" y="322.3" width="3.2" height="14" fill="#fff" stroke="#08dc08" stroke-width="1.4"/><line x1="548.5" y1="328.1" x2="593" y2="328.1" stroke="#000" stroke-width="1.6"/><rect x="780.5" y="322.3" width="54.5" height="14" fill="#fff"/><line x1="780.5" y1="329.3" x2="835" y2="329.3" stroke="#00dede" stroke-width="1.3" stroke-dasharray="14 3 2.5 3"/><line x1="780.5" y1="326.1" x2="835" y2="326.1" stroke="#08dc08" stroke-width="2.4"/><rect x="778.9" y="322.3" width="3.2" height="14" fill="#fff" stroke="#08dc08" stroke-width="1.4"/><rect x="833.4" y="322.3" width="3.2" height="14" fill="#fff" stroke="#08dc08" stroke-width="1.4"/><rect x="901.3" y="322.3" width="48.7" height="14" fill="#fff"/><line x1="901.3" y1="329.3" x2="950" y2="329.3" stroke="#00dede" stroke-width="1.3" stroke-dasharray="14 3 2.5 3"/><line x1="901.3" y1="326.1" x2="950" y2="326.1" stroke="#08dc08" stroke-width="2.4"/><rect x="899.7" y="322.3" width="3.2" height="14" fill="#fff" stroke="#08dc08" stroke-width="1.4"/><rect x="948.4" y="322.3" width="3.2" height="14" fill="#fff" stroke="#08dc08" stroke-width="1.4"/><rect x="1336.7" y="322.3" width="60.8" height="14" fill="#fff"/><line x1="1336.7" y1="329.3" x2="1397.5" y2="329.3" stroke="#00dede" stroke-width="1.3" stroke-dasharray="14 3 2.5 3"/><line x1="1336.7" y1="326.1" x2="1397.5" y2="326.1" stroke="#08dc08" stroke-width="2.4"/><rect x="1335.1" y="322.3" width="3.2" height="14" fill="#fff" stroke="#08dc08" stroke-width="1.4"/><rect x="1395.9" y="322.3" width="3.2" height="14" fill="#fff" stroke="#08dc08" stroke-width="1.4"/><rect x="1399.5" y="322.3" width="55.5" height="4.8" fill="#fff"/><line x1="1399" y1="328.7" x2="1455" y2="328.7" stroke="#000" stroke-width="1.6"/><rect x="1453.5" y="322.3" width="3.2" height="9" fill="#fff" stroke="#08dc08" stroke-width="1.4"/><rect x="766.5" y="267.5" width="14" height="55.7" fill="#fff"/><line x1="770.9" y1="268" x2="770.9" y2="323" stroke="#cc00cc" stroke-width="2"/><line x1="768" y1="268" x2="768" y2="323" stroke="#00dede" stroke-width="1.4"/><line x1="775.5" y1="268" x2="775.5" y2="323" stroke="#00dede" stroke-width="1.3" stroke-dasharray="14 3 2.5 3"/><line x1="779.1" y1="270" x2="779.1" y2="323" stroke="#00dede" stroke-width="1.4"/><path d="M767.5 267.3h5v4h-5zM767.5 319.5h5v4h-5zM767 214h6.5v3h-6.5z" stroke="#cc00cc" stroke-width="1.3" fill="#fff"/><rect x="774" y="267" width="7" height="3.2" fill="#fff" stroke="#08dc08" stroke-width="1.3"/><rect x="1008.6" y="322.3" width="65" height="14" fill="#fff"/><rect x="996.4" y="266" width="2.2" height="58.7" fill="#fff"/><line x1="998" y1="266" x2="998" y2="324.3" stroke="#00dede" stroke-width="1.4"/><rect x="1086" y="322.3" width="105.5" height="14.5" fill="#fff"/><line x1="1086" y1="329.7" x2="1191.5" y2="329.7" stroke="#00dede" stroke-width="1.4"/><line x1="1086" y1="336.3" x2="1191.5" y2="336.3" stroke="#00dede" stroke-width="1.4"/><line x1="1138.7" y1="322.3" x2="1138.7" y2="336.3" stroke="#00dede" stroke-width="1.4"/><path d="M1085.5 321.5V333L1092.5 354.5H1096L1104 331M1089 333L1093.7 350L1100 331" stroke="#08dc08" stroke-width="1.7" fill="none"/><path d="M1192 321.5V333L1185 354.5H1181.5L1173.5 331M1188.5 333L1183.8 350L1177.5 331" stroke="#08dc08" stroke-width="1.7" fill="none"/><rect x="1205.6" y="322.3" width="32.4" height="2.4" fill="#fff"/><line x1="1205.6" y1="324.3" x2="1238" y2="324.3" stroke="#00dede" stroke-width="1.4"/><line x1="1256.6" y1="321.8" x2="1256.6" y2="327.3" stroke="#08dc08" stroke-width="1.8"/><line x1="702.5" y1="335" x2="702.5" y2="388" stroke="#08dc08" stroke-width="2.8"/><line x1="707.9" y1="335" x2="707.9" y2="399" stroke="#00dede" stroke-width="1.3" stroke-dasharray="14 3 2.5 3"/><line x1="700" y1="335.6" x2="716" y2="335.6" stroke="#08dc08" stroke-width="2.4"/><rect x="701" y="386.5" width="14" height="3.4" fill="#fff" stroke="#08dc08" stroke-width="1.3"/><path d="M650.8 335Q654 382 700 387.5" stroke="#00dede" stroke-width="1.4" fill="none"/><rect x="701.3" y="390.5" width="13.6" height="9.5" fill="#fff"/><line x1="703" y1="390.5" x2="703" y2="400" stroke="#000" stroke-width="1.6"/><line x1="704.9" y1="390.5" x2="704.9" y2="402" stroke="#00dede" stroke-width="1.3"/><line x1="710.7" y1="390.5" x2="710.7" y2="402" stroke="#00dede" stroke-width="1.3"/><line x1="713" y1="390.5" x2="713" y2="401" stroke="#000" stroke-width="1.6"/><line x1="707.9" y1="390" x2="707.9" y2="402" stroke="#00dede" stroke-width="1.3"/><line x1="1204.2" y1="335" x2="1204.2" y2="388" stroke="#08dc08" stroke-width="2.8"/><line x1="1199.5" y1="335" x2="1199.5" y2="399" stroke="#00dede" stroke-width="1.3" stroke-dasharray="14 3 2.5 3"/><line x1="1191" y1="335.6" x2="1205.5" y2="335.6" stroke="#08dc08" stroke-width="2.4"/><rect x="1192.5" y="386.5" width="13" height="3.4" fill="#fff" stroke="#08dc08" stroke-width="1.3"/><path d="M1257.5 335Q1254 382 1206 388" stroke="#00dede" stroke-width="1.4" fill="none"/><rect x="1192.5" y="390.5" width="14" height="9.5" fill="#fff"/><line x1="1194.2" y1="390.5" x2="1194.2" y2="401" stroke="#000" stroke-width="1.6"/><line x1="1205" y1="390.5" x2="1205" y2="401" stroke="#000" stroke-width="1.6"/><line x1="1196.5" y1="390.5" x2="1196.5" y2="402" stroke="#00dede" stroke-width="1.3"/><line x1="1202.3" y1="390.5" x2="1202.3" y2="402" stroke="#00dede" stroke-width="1.3"/><path d="M902.5 324V280Q941 284 946 323" stroke="#00dede" stroke-width="1.4" fill="none"/><rect x="878.3" y="399.3" width="117.2" height="14" fill="#fff"/><line x1="878.3" y1="406.3" x2="995.5" y2="406.3" stroke="#00dede" stroke-width="1.3" stroke-dasharray="14 3 2.5 3"/><line x1="878.3" y1="411.3" x2="995.5" y2="411.3" stroke="#08dc08" stroke-width="2.4"/><rect x="876.7" y="399.3" width="3.2" height="14" fill="#fff" stroke="#08dc08" stroke-width="1.4"/><rect x="993.9" y="399.3" width="3.2" height="14" fill="#fff" stroke="#08dc08" stroke-width="1.4"/><path d="M840 411.5Q842 448 878 451Q912 449 917 417" stroke="#00dede" stroke-width="1.4" fill="none"/><path d="M916.5 412Q922 478 994 489.5V411.5" stroke="#00dede" stroke-width="1.4" fill="none"/><rect x="584" y="595" width="117.5" height="14" fill="#fff"/><line x1="544" y1="602" x2="702" y2="602" stroke="#00dede" stroke-width="1.3" stroke-dasharray="14 3 2.5 3"/><line x1="583" y1="600.2" x2="702" y2="600.2" stroke="#08dc08" stroke-width="1.5"/><line x1="583" y1="602.6" x2="702" y2="602.6" stroke="#08dc08" stroke-width="1.5"/><rect x="581.5" y="596" width="3" height="12" fill="#fff" stroke="#08dc08" stroke-width="1.4"/><rect x="700.3" y="596" width="3" height="12" fill="#fff" stroke="#08dc08" stroke-width="1.4"/><rect x="548.6" y="595" width="33.4" height="4.6" fill="#fff"/><line x1="548.6" y1="599" x2="582" y2="599" stroke="#00dede" stroke-width="1.3"/><rect x="1102" y="530" width="63.5" height="14" fill="#fff"/><line x1="1102" y1="537" x2="1165.5" y2="537" stroke="#00dede" stroke-width="1.3" stroke-dasharray="14 3 2.5 3"/><line x1="1102" y1="541.6" x2="1165.5" y2="541.6" stroke="#08dc08" stroke-width="2.4"/><rect x="1100.8" y="530" width="3.2" height="14" fill="#fff" stroke="#08dc08" stroke-width="1.4"/><line x1="1165.3" y1="530" x2="1165.3" y2="544" stroke="#08dc08" stroke-width="3"/><path d="M1104 546V600M1104 552Q1112 596 1160 602M1162 546V600" stroke="#00dede" stroke-width="1.3" fill="none" opacity=".75"/><path d="M1073.6 542.4H1100M1167 542.4H1194M1073.6 543V672M997.5 672.3H1073" stroke="#00dede" stroke-width="2.4" fill="none"/><path d="M1073.6 542.4H1100M1167 542.4H1194M1073.6 543V672M997.5 672.3H1073" stroke="#000" stroke-width="1.9" fill="none" stroke-dasharray="5 3.5"/><path d="M1194.5 607.6H1272M1457 607.6H1522M1522 608V672" stroke="#00dede" stroke-width="2.4" fill="none"/><path d="M1194.5 607.6H1272M1457 607.6H1522M1522 608V672" stroke="#000" stroke-width="1.8" fill="none" stroke-dasharray="5 3.5"/><line x1="1205" y1="609.5" x2="1205" y2="661.5" stroke="#00dede" stroke-width="2.2"/><line x1="1194.3" y1="607" x2="1194.3" y2="672.5" stroke="#000" stroke-width="1.7"/><rect x="1194.3" y="662.5" width="10.5" height="10" fill="none" stroke="#000" stroke-width="1.6"/><line x1="1521.5" y1="672.2" x2="1533.5" y2="672.2" stroke="#000" stroke-width="2"/><rect x="592" y="215" width="44.5" height="44" fill="none" stroke="#08dc08" stroke-width="1.7" stroke-dasharray="7 5"/><rect x="651.3" y="225" width="51.2" height="88" rx="7" fill="none" stroke="#08dc08" stroke-width="1.5"/><line x1="706.3" y1="214.5" x2="706.3" y2="323.5" stroke="#08dc08" stroke-width="1.5"/><rect x="846.3" y="214.5" width="43.7" height="93.8" fill="none" stroke="#00dede" stroke-width="1.4"/><ellipse cx="868" cy="260.8" rx="16.3" ry="20.8" fill="none" stroke="#00dede" stroke-width="1.4"/><path d="M979.2 234.5V222.5H994.7V259H979.2V247.5Q975.2 247 970.2 250.5Q961.2 257 949.2 250Q942.2 242 948.2 232.5Q959.2 224.5 970.2 231.5Q975.2 235 979.2 234.5" stroke="#00dede" stroke-width="1.4" fill="none"/><path d="M1223 234.5V222.5H1207.5V259H1223V247.5Q1227 247 1232 250.5Q1241 257 1253 250Q1260 242 1254 232.5Q1243 224.5 1232 231.5Q1227 235 1223 234.5" stroke="#00dede" stroke-width="1.4" fill="none"/><path d="M964.7 275.8V265.8H997.5M964.7 315V323.3H997" stroke="#00dede" stroke-width="1.4" fill="none"/><rect x="958.7" y="275.8" width="31.6" height="39.2" fill="none" stroke="#00dede" stroke-width="1.4"/><path d="M1237.5 275.8V265.8H1205.5M1237.5 315V323.3" stroke="#00dede" stroke-width="1.4" fill="none"/><rect x="1211.7" y="275.8" width="32.3" height="39.2" fill="none" stroke="#00dede" stroke-width="1.4"/><path d="M1074.7 214.5V280.5M1090 214.5V280.5M1105.3 214.5V280.5M1120.8 214.5V280.5M1007 286.7H1073.5M1007 302.8H1073.5M1007 318H1073.5M1007 333.3H1073.5M1040 330V248H1118M1106 243.5L1119 248L1106 252.5M1139 201L1128 243L1137 249L1125 251.5L1117.5 292" stroke="#00dede" stroke-width="1.4" fill="none"/><circle cx="1040" cy="333.3" r="3.2" fill="#fff" stroke="#00dede" stroke-width="1.3"/><rect x="549" y="353.3" width="45" height="55" fill="none" stroke="#08dc08" stroke-width="1.6" stroke-dasharray="7 5"/><rect x="550" y="410.3" width="46.7" height="186.5" fill="none" stroke="#08dc08" stroke-width="1.5"/><rect x="552.5" y="433" width="37.5" height="65" rx="7" fill="none" stroke="#08dc08" stroke-width="1.5"/><rect x="556.5" y="542.5" width="35.5" height="42.5" fill="none" stroke="#08dc08" stroke-width="1.4"/><circle cx="582.5" cy="552" r="4" fill="none" stroke="#08dc08" stroke-width="1.4"/><circle cx="582.5" cy="573" r="4" fill="none" stroke="#08dc08" stroke-width="1.4"/><circle cx="564.3" cy="573" r="3" fill="none" stroke="#08dc08" stroke-width="1.4"/><rect x="669.5" y="406.5" width="34" height="130.5" fill="none" stroke="#08dc08" stroke-width="1.6" stroke-dasharray="7 5"/><path d="M812 411L1061.5 661M1061.5 411L812 661" stroke="#08dc08" stroke-width="1.6" fill="none" stroke-dasharray="2.5 4.5"/><line x1="812" y1="411" x2="812" y2="597" stroke="#08dc08" stroke-width="1.5" stroke-dasharray="3 3"/><rect x="931" y="489.3" width="34" height="7.5" fill="#fff" stroke="#000" stroke-width="1.5"/><line x1="912" y1="512" x2="931" y2="495" stroke="#08dc08" stroke-width="1.5"/><rect x="1073.6" y="406.5" width="32" height="97.2" fill="none" stroke="#08dc08" stroke-width="1.6"/><path d="M1105.6 432H1194M1105.6 438.7H1194" stroke="#08dc08" stroke-width="1.6" fill="none"/><path d="M1252.5 401V607M1260 401V607M1245 455.8H1260M1245 553H1260" stroke="#00dede" stroke-width="1.4" fill="none"/><path d="M1258.4 401V413M1258.4 497V511.5" stroke="#000" stroke-width="1.6" fill="none"/><path d="M1247 411h12v3h-12zM1253 415L1273 418L1256 421L1274 423L1253 428" stroke="#08dc08" stroke-width="1.5" fill="none"/><path d="M1247 499h12v-3h-12zM1253 495L1273 492L1256 489L1274 487L1253 482" stroke="#08dc08" stroke-width="1.5" fill="none"/><path d="M1247 510h12v3h-12zM1253 514L1273 517L1256 520L1274 522L1253 527" stroke="#08dc08" stroke-width="1.5" fill="none"/><path d="M1247 597h12v-3h-12zM1253 593L1273 590L1256 587L1274 585L1253 580" stroke="#08dc08" stroke-width="1.5" fill="none"/><text x="563" y="269.5" font-size="12" text-anchor="start" font-family="Liberation Sans,IPAGothic,Noto Sans CJK JP,sans-serif" fill="#000" textLength="58" lengthAdjust="spacingAndGlyphs" font-style="italic">ユーティリ</text><text x="564" y="282" font-size="12" text-anchor="start" font-family="Liberation Sans,IPAGothic,Noto Sans CJK JP,sans-serif" fill="#000" textLength="38" lengthAdjust="spacingAndGlyphs" font-style="italic">ティー</text><text x="720" y="301.5" font-size="13" text-anchor="start" font-family="Liberation Sans,IPAGothic,Noto Sans CJK JP,sans-serif" fill="#000" textLength="26" lengthAdjust="spacingAndGlyphs" stroke="#000" stroke-width=".35">浴室</text><text x="802.5" y="301.5" font-size="13" text-anchor="start" font-family="Liberation Sans,IPAGothic,Noto Sans CJK JP,sans-serif" fill="#000" textLength="39" lengthAdjust="spacingAndGlyphs" stroke="#000" stroke-width=".35">脱衣室</text><text x="1130.8" y="307.5" font-size="13" text-anchor="start" font-family="Liberation Sans,IPAGothic,Noto Sans CJK JP,sans-serif" fill="#000" textLength="25" lengthAdjust="spacingAndGlyphs" stroke="#000" stroke-width=".35">物入</text><text x="1408" y="308.5" font-size="13" text-anchor="start" font-family="Liberation Sans,IPAGothic,Noto Sans CJK JP,sans-serif" fill="#000" textLength="26.5" lengthAdjust="spacingAndGlyphs" stroke="#000" stroke-width=".35">附室</text><text x="1108" y="376" font-size="12" text-anchor="start" font-family="Liberation Sans,IPAGothic,Noto Sans CJK JP,sans-serif" fill="#000" textLength="40" lengthAdjust="spacingAndGlyphs" font-style="italic">ホール</text><text x="608" y="485.5" font-size="12" text-anchor="start" font-family="Liberation Sans,IPAGothic,Noto Sans CJK JP,sans-serif" fill="#000" textLength="50" lengthAdjust="spacingAndGlyphs" font-style="italic">キッチン</text><text x="1380" y="478.5" font-size="13" text-anchor="start" font-family="Liberation Sans,IPAGothic,Noto Sans CJK JP,sans-serif" fill="#000" textLength="38" lengthAdjust="spacingAndGlyphs" stroke="#000" stroke-width=".35">主寝室</text><text x="1122.5" y="507" font-size="13" text-anchor="start" font-family="Liberation Sans,IPAGothic,Noto Sans CJK JP,sans-serif" fill="#000" textLength="25" lengthAdjust="spacingAndGlyphs" stroke="#000" stroke-width=".35">玄関</text><text x="866.5" y="560" font-size="12" text-anchor="start" font-family="Liberation Sans,IPAGothic,Noto Sans CJK JP,sans-serif" fill="#000" textLength="88" lengthAdjust="spacingAndGlyphs" font-style="italic">リビングルーム</text><text x="640.5" y="713.5" font-size="12" text-anchor="start" font-family="Liberation Sans,IPAGothic,Noto Sans CJK JP,sans-serif" fill="#000" textLength="62" lengthAdjust="spacingAndGlyphs" font-style="italic">ダイニング</text><rect x="978" y="724.5" width="42" height="13" fill="#fff"/><text x="980" y="735.5" font-size="12" text-anchor="start" font-family="Liberation Sans,IPAGothic,Noto Sans CJK JP,sans-serif" fill="#000" textLength="38" lengthAdjust="spacingAndGlyphs" font-style="italic">テラス</text><text x="940" y="921" font-size="19" text-anchor="start" font-family="Liberation Serif,Noto Serif CJK JP,serif" fill="#111" textLength="196" lengthAdjust="spacingAndGlyphs">１ 階平面図　Ｓ ＝1/50</text><defs><pattern id="gd" x="527.6" y="192.9" width="65.58" height="65.5" patternUnits="userSpaceOnUse"><path d="M48.4 16.4h1.5M15.6 49.1h1.5M48.4 49.1h1.5" stroke="#00dede" stroke-width="1.5" fill="none"/><path d="M14 16.4L16.4 14L18.7 16.4L16.4 18.7Z" stroke="#08dc08" stroke-width=".4" fill="#08dc08"/></pattern></defs><rect x="111" y="109" width="1698" height="880" fill="url(#gd)"/><line x1="311" y1="118" x2="311" y2="990" stroke="#ff10ff" stroke-width="2.2" stroke-dasharray="2.2 9.7"/></svg><div id="title" class="abs"><div class="shade abs"></div><svg class="abs" style="left:0;top:4px" width="23" height="23" viewBox="0 0 23 23"><rect width="23" height="23" fill="#000"/><rect x="3" y="11" width="20" height="12" fill="#0000e8"/><text x="1" y="17" font-family="Liberation Serif,serif" font-style="italic" font-weight="bold" font-size="19" fill="#f4e800">jw</text></svg><span id="ttext" class="abs f" style="transform:scaleX(1.060)">ken2.jww - jw_win</span><svg class="abs" style="left:1768px;top:0" width="152" height="30" viewBox="0 0 152 30"><defs><linearGradient id="wbg" x1="0" y1="0" x2="0" y2="1"><stop offset="0" stop-color="#c9cbc4"/><stop offset=".46" stop-color="#b0b3aa"/><stop offset=".5" stop-color="#687060"/><stop offset="1" stop-color="#828a7b"/></linearGradient><linearGradient id="wbr" x1="0" y1="0" x2="0" y2="1"><stop offset="0" stop-color="#eeb0a0"/><stop offset=".46" stop-color="#dc7a64"/><stop offset=".5" stop-color="#c03c1e"/><stop offset=".8" stop-color="#cf5a38"/><stop offset="1" stop-color="#e08a6c"/></linearGradient></defs><path d="M1.8 0 V19.5 Q1.8 26 8.5 26 H141 Q147.700 26 147.700 19.5 V0 Z" fill="#2d302a"/><path d="M3.200 0 V19 Q3.200 24.600 9 24.600 H80 V0 Z" fill="url(#wbg)"/><path d="M80 0 V24.600 H140.500 Q146.300 24.600 146.300 19 V0 Z" fill="url(#wbr)"/><path d="M3.800 0 V19 Q3.800 24 9 24 H140.500 Q145.700 24 145.700 19 V0" fill="none" stroke="#e6e8e2" stroke-width=".9" opacity=".8"/><path d="M41 0 V24.500 M80 0 V24.500" stroke="#3a3d36" stroke-width="1.2"/><path d="M42.200 0 V24 M81.200 0 V24 M39.800 0 V24 M78.800 0 V24" stroke="#e6e8e2" stroke-width=".8" opacity=".8"/><rect x="16" y="11.500" width="15.500" height="5.800" rx="1" fill="#fff" stroke="#4a4d5a" stroke-width=".9"/><rect x="56.500" y="4" width="12" height="11" rx="1" fill="#fff" stroke="#4a4d5a" stroke-width=".9"/><rect x="52.500" y="7.500" width="12.500" height="11.500" rx="1" fill="#fff" stroke="#4a4d5a" stroke-width=".9"/><rect x="56.500" y="11" width="5" height="5" fill="#7d8476" stroke="#4a4d5a" stroke-width=".8"/><text x="115" y="18.500" text-anchor="middle" font-family="Liberation Sans,sans-serif" font-weight="bold" font-size="23" fill="#fff" stroke="#4a4048" stroke-width=".8" textLength="17.500" lengthAdjust="spacingAndGlyphs">x</text></svg><div class="abs" style="left:0;top:28.5px;width:1920px;height:1.5px;background:#3c3f3a"></div></div><div id="menu" class="abs"><span class="f" style="transform:scaleX(0.985);left:10px">ファイル(F)</span><span class="f" style="transform:scaleX(1.054);left:121px">[ 編集(E) ]</span><span class="f" style="transform:scaleX(1.029);left:222px">表示(V)</span><span class="f" style="transform:scaleX(1.079);left:302px">[ 作図(D) ]</span><span class="f" style="transform:scaleX(1.012);left:407px">設定(S)</span><span class="f" style="transform:scaleX(1.052);left:486px">[その他(A)]</span><span class="f" style="transform:scaleX(1.016);left:595px">ヘルプ(H)</span></div><div id="ctrl" class="abs"><div class="abs" style="left:2px;top:2px;width:2px;height:41px;background:#9a9a9a"></div><div class="abs" style="left:1170px;top:0;width:2px;height:43px;background:#9a9a9a"></div><div class="abs" style="left:1172px;top:0;width:748px;height:43px;background:linear-gradient(180deg,#fdfdfe 0%,#f1f2f9 15%,#d6dbee 32%,#d3d9ec 75%,#e6e9f4 100%)"></div><div class="cb" style="left:30px"></div><span class="lbl f" style="transform:scaleX(0.971);left:54px">矩形</span><div class="cb" style="left:104px"></div><span class="lbl f" style="transform:scaleX(0.940);left:129px">水平･垂直</span><span class="lbl f" style="transform:scaleX(0.857);left:216px">傾き</span><div class="combo" style="left:252px;width:135px"><i></i></div><span class="lbl f" style="transform:scaleX(0.943);left:409px">寸法</span><div class="combo" style="left:449px;width:152px"><i></i></div><div class="cb" style="left:616px"></div><span class="lbl f" style="transform:scaleX(0.991);left:642px">15度毎</span><div class="cb" style="left:708px"></div><div class="dbtn" style="left:732px;width:85px"><b style="display:inline-block;width:15px;height:15px;border-radius:50%;background:#9c9c9c;vertical-align:-1px;margin-right:3px"></b>- - - -</div><div class="cb" style="left:829px"></div><div class="dbtn" style="left:852px;width:89px">&lt; - - - -</div><div class="cb" style="left:957px"></div><span class="lbl f" style="transform:scaleX(0.952);left:982px">寸法値</span><div class="cb" style="left:1058px"></div><span class="lbl f" style="transform:scaleX(1.270);left:1084px">&lt;</span></div><div class="tb abs" style="left:0;top:107px;width:109px;height:887px;border-right:2px solid #8a8a8a;border-bottom:1.5px solid #8a8a8a"></div><div class="vsep" style="left:51.5px;top:110px;height:313px"></div><div class="hsep" style="left:0;top:424px;width:107px"></div><div class="vsep" style="left:51.5px;top:429px;height:313px"></div><div class="hsep" style="left:0;top:742.5px;width:53px"></div><div class="hsep" style="left:53px;top:745.5px;width:54px"></div><div class="vsep" style="left:51.5px;top:747px;height:176px"></div><div class="blue" style="left:54.5px;top:748px;width:52.5px;height:44px;background:linear-gradient(180deg,#f4f5fb 0%,#eceef8 20%,#dfe3f3 100%)"></div><div class="hsep" style="left:53px;top:792px;width:54px"></div><div class="blue" style="left:54.5px;top:795px;width:52.5px;height:17.5px;background:#d1d7ea"></div><div class="hsep" style="left:53px;top:813px;width:54px"></div><div class="abs" style="left:56.5px;top:757px;width:48.5px;height:27.5px;background:#fff;border-top:1.5px solid #e8e8e8;border-left:1.5px solid #e8e8e8;border-right:2.5px solid #111;border-bottom:2.5px solid #111"><div style="position:absolute;left:1px;right:1px;top:10.55px;height:1.6px;background:#10d810"></div></div><div class="hsep" style="left:0;top:923.5px;width:107px"></div><div class="blue" style="left:0;top:926px;width:107px;height:66.5px;background:linear-gradient(180deg,#d4d9ec 0%,#d2d8eb 60%,#dde1f2 100%)"></div><div class="abs" style="left:50.5px;top:926px;width:1.5px;height:66.5px;background:#e2e6f4"></div><div class="b " style="left:4.5px;top:117px;width:43px;height:29px;"><span class="f" style="transform:scaleX(0.914)">点</span></div><div class="b " style="left:4.5px;top:148px;width:43px;height:29px;"><span class="f" style="transform:scaleX(0.943)">接線</span></div><div class="b " style="left:4.5px;top:179.5px;width:43px;height:29px;"><span class="f" style="transform:scaleX(0.943)">接円</span></div><div class="b " style="left:4.5px;top:217px;width:43px;height:29px;"><span class="f" style="transform:scaleX(1.257)">ﾊｯﾁ</span></div><div class="b " style="left:4.5px;top:255px;width:43px;height:29px;"><span class="f" style="transform:scaleX(0.943)">建平</span></div><div class="b " style="left:4.5px;top:286px;width:43px;height:29px;"><span class="f" style="transform:scaleX(0.943)">建断</span></div><div class="b " style="left:4.5px;top:317px;width:43px;height:29px;"><span class="f" style="transform:scaleX(0.943)">建立</span></div><div class="b " style="left:4.5px;top:355px;width:43px;height:29px;"><span class="f" style="transform:scaleX(0.629)">多角形</span></div><div class="b " style="left:4.5px;top:386px;width:43px;height:29px;"><span class="f" style="transform:scaleX(0.943)">曲線</span></div><div class="b " style="left:4.5px;top:436.5px;width:43px;height:29px;"><span class="f" style="transform:scaleX(0.943)">包絡</span></div><div class="b " style="left:4.5px;top:467.5px;width:43px;height:29px;"><span class="f" style="transform:scaleX(0.943)">分割</span></div><div class="b " style="left:4.5px;top:498px;width:43px;height:29px;"><span class="f" style="transform:scaleX(0.943)">整理</span></div><div class="b " style="left:4.5px;top:529px;width:43px;height:29px;"><span class="f" style="transform:scaleX(0.943)">属変</span></div><div class="b d" style="left:4.5px;top:566.5px;width:43px;height:29px;"><span class="f" style="transform:scaleX(0.848)">BL化</span></div><div class="b d" style="left:4.5px;top:598px;width:43px;height:29px;"><span class="f" style="transform:scaleX(0.848)">BL解</span></div><div class="b d" style="left:4.5px;top:629px;width:43px;height:29px;"><span class="f" style="transform:scaleX(0.848)">BL属</span></div><div class="b d" style="left:4.5px;top:667px;width:43px;height:29px;"><span class="f" style="transform:scaleX(0.848)">BL編</span></div><div class="b d" style="left:4.5px;top:704.5px;width:43px;height:29px;"><span class="f" style="transform:scaleX(0.848)">BL終</span></div><div class="b " style="left:4.5px;top:755px;width:43px;height:29px;"><span class="f" style="transform:scaleX(0.943)">図形</span></div><div class="b " style="left:4.5px;top:786px;width:43px;height:29px;"><span class="f" style="transform:scaleX(0.943)">図登</span></div><div class="b " style="left:4.5px;top:817px;width:43px;height:29px;"><span class="f" style="transform:scaleX(0.943)">記変</span></div><div class="b " style="left:4.5px;top:848px;width:43px;height:29px;"><span class="f" style="transform:scaleX(0.943)">座標</span></div><div class="b " style="left:4.5px;top:886px;width:43px;height:29px;"><span class="f" style="transform:scaleX(0.943)">外変</span></div><div class="b p" style="left:59px;top:117px;width:43px;height:29px;"><svg width="40" height="26" viewBox="0 0 40 26" style="display:block"><line x1="12.5" y1="20" x2="30" y2="5" stroke="#111" stroke-width="1.6"/></svg></div><div class="b " style="left:59px;top:148px;width:43px;height:29px;"><svg width="40" height="26" viewBox="0 0 40 26" style="display:block"><rect x="10.5" y="4.5" width="18" height="16" fill="none" stroke="#111" stroke-width="1.7"/></svg></div><div class="b " style="left:59px;top:179.5px;width:43px;height:29px;"><svg width="40" height="26" viewBox="0 0 40 26" style="display:block"><circle cx="19" cy="12.5" r="8.3" fill="none" stroke="#111" stroke-width="1.5"/></svg></div><div class="b " style="left:59px;top:217px;width:43px;height:29px;"><span class="f" style="transform:scaleX(0.943)">文字</span></div><div class="b " style="left:59px;top:248px;width:43px;height:29px;"><span class="f" style="transform:scaleX(0.943)">寸法</span></div><div class="b " style="left:59px;top:286px;width:43px;height:29px;"><span class="f" style="transform:scaleX(0.943)">２線</span></div><div class="b " style="left:59px;top:317px;width:43px;height:29px;"><span class="f" style="transform:scaleX(0.629)">中心線</span></div><div class="b " style="left:59px;top:348px;width:43px;height:29px;"><span class="f" style="transform:scaleX(0.943)">連線</span></div><div class="b " style="left:59px;top:386px;width:43px;height:29px;"><span class="f" style="transform:scaleX(0.683)">AUTO</span></div><div class="b " style="left:59px;top:440px;width:43px;height:29px;"><span class="f" style="transform:scaleX(0.943)">範囲</span></div><div class="b " style="left:59px;top:478px;width:43px;height:29px;"><span class="f" style="transform:scaleX(0.943)">複線</span></div><div class="b " style="left:59px;top:509.5px;width:43px;height:29px;"><span class="f" style="transform:scaleX(0.943)">ｺｰﾅｰ</span></div><div class="b " style="left:59px;top:540.5px;width:43px;height:29px;"><span class="f" style="transform:scaleX(0.943)">伸縮</span></div><div class="b " style="left:59px;top:571px;width:43px;height:29px;"><span class="f" style="transform:scaleX(0.943)">面取</span></div><div class="b " style="left:59px;top:602.5px;width:43px;height:29px;"><span class="f" style="transform:scaleX(0.943)">消去</span></div><div class="b " style="left:59px;top:640px;width:43px;height:29px;"><span class="f" style="transform:scaleX(0.943)">複写</span></div><div class="b " style="left:59px;top:671px;width:43px;height:29px;"><span class="f" style="transform:scaleX(0.943)">移動</span></div><div class="b d" style="left:59px;top:708.5px;width:43px;height:29px;"><span class="f" style="transform:scaleX(0.943)">戻る</span></div><div class="b " style="left:59px;top:824.5px;width:43px;height:29px;"><span class="f" style="transform:scaleX(0.893)">2.5D</span></div><div class="b " style="left:59px;top:855.5px;width:43px;height:29px;"><span class="f" style="transform:scaleX(0.943)">日影</span></div><div class="b " style="left:59px;top:886px;width:43px;height:29px;"><span class="f" style="transform:scaleX(0.943)">天空</span></div><div class="tb abs" style="left:1811px;top:107px;width:109px;height:887px;border-left:1.5px solid #fff;border-bottom:1.5px solid #8a8a8a"></div><div class="abs" style="left:1810px;top:107px;width:1.5px;height:886px;background:#f4f4f4"></div><div class="vsep" style="left:1865px;top:110px;height:313px"></div><div class="hsep" style="left:1813px;top:424px;width:107px"></div><div class="vsep" style="left:1865px;top:429px;height:178px"></div><div class="b " style="left:1817.5px;top:117.5px;width:43px;height:29px;"><span class="f" style="transform:scaleX(0.943)">新規</span></div><div class="b " style="left:1817.5px;top:148.5px;width:43px;height:29px;"><span class="f" style="transform:scaleX(0.943)">開く</span></div><div class="b " style="left:1817.5px;top:179.5px;width:43px;height:29px;"><span class="f" style="transform:scaleX(0.943)">上書</span></div><div class="b " style="left:1817.5px;top:210.5px;width:43px;height:29px;"><span class="f" style="transform:scaleX(0.943)">保存</span></div><div class="b " style="left:1817.5px;top:248px;width:43px;height:29px;"><span class="f" style="transform:scaleX(0.943)">印刷</span></div><div class="b d" style="left:1817.5px;top:286px;width:43px;height:29px;"><span class="f" style="transform:scaleX(0.943)">切取</span></div><div class="b d" style="left:1817.5px;top:317px;width:43px;height:29px;"><span class="f" style="transform:scaleX(0.943)">ｺﾋﾟｰ</span></div><div class="b d" style="left:1817.5px;top:348px;width:43px;height:29px;"><span class="f" style="transform:scaleX(0.943)">貼付</span></div><div class="b bl" style="left:1817.5px;top:385.5px;width:43px;height:29px;"><span class="f" style="transform:scaleX(0.629)">線属性</span></div><div class="b " style="left:1817.5px;top:436.5px;width:43px;height:29px;"><span class="f" style="transform:scaleX(0.943)">寸化</span></div><div class="b " style="left:1817.5px;top:467.5px;width:43px;height:29px;"><span class="f" style="transform:scaleX(0.943)">寸解</span></div><div class="b d" style="left:1817.5px;top:498px;width:43px;height:29px;"><span class="f" style="transform:scaleX(0.943)">選図</span></div><div class="b n" style="left:1872.5px;top:117.5px;width:43px;height:29px;"><span class="f" style="transform:scaleX(0.943)">属取</span></div><div class="b n" style="left:1872.5px;top:155px;width:43px;height:29px;"><span class="f" style="transform:scaleX(0.943)">線角</span></div><div class="b n" style="left:1872.5px;top:186px;width:43px;height:29px;"><span class="f" style="transform:scaleX(0.943)">鉛直</span></div><div class="b n" style="left:1872.5px;top:217px;width:43px;height:29px;"><span class="f" style="transform:scaleX(0.943)">Ｘ軸</span></div><div class="b n" style="left:1872.5px;top:248px;width:43px;height:29px;"><span class="f" style="transform:scaleX(0.738)">2点角</span></div><div class="b n" style="left:1872.5px;top:286px;width:43px;height:29px;"><span class="f" style="transform:scaleX(0.943)">線長</span></div><div class="b n" style="left:1872.5px;top:317px;width:43px;height:29px;"><span class="f" style="transform:scaleX(0.738)">2点長</span></div><div class="b n" style="left:1872.5px;top:348px;width:43px;height:29px;"><span class="f" style="transform:scaleX(0.943)">間隔</span></div><div class="b n" style="left:1872.5px;top:385.5px;width:43px;height:29px;"><span class="f" style="transform:scaleX(0.943)">基設</span></div><div class="b " style="left:1872.5px;top:436.5px;width:43px;height:29px;"><span class="f" style="transform:scaleX(0.943)">測定</span></div><div class="b " style="left:1872.5px;top:467.5px;width:43px;height:29px;"><span class="f" style="transform:scaleX(0.943)">表計</span></div><div class="b " style="left:1872.5px;top:498px;width:43px;height:29px;"><span class="f" style="transform:scaleX(0.943)">距離</span></div><div class="b " style="left:1872.5px;top:536.5px;width:43px;height:29px;"><span class="f" style="transform:scaleX(0.943)">式計</span></div><div class="b " style="left:1872.5px;top:567.5px;width:43px;height:29px;"><span class="f" style="transform:scaleX(0.943)">ﾊﾟﾗﾒ</span></div><div class="hsep" style="left:1813px;top:536px;width:52px"></div><div class="blue" style="left:1813px;top:539px;width:52px;height:43px;background:linear-gradient(180deg,#f4f5fb 0%,#eceef8 20%,#dfe3f3 100%)"></div><div class="abs" style="left:1815.5px;top:546.5px;width:48.5px;height:27.5px;background:#fff;border-top:1.5px solid #e8e8e8;border-left:1.5px solid #e8e8e8;border-right:2.5px solid #111;border-bottom:2.5px solid #111"><div style="position:absolute;left:1px;right:1px;top:10.55px;height:1.6px;background:#10d810"></div></div><div class="hsep" style="left:1813px;top:581.5px;width:52px"></div><div class="blue" style="left:1813px;top:584.5px;width:52px;height:21px;background:#d1d7ea"></div><div class="hsep" style="left:1813px;top:605.5px;width:107px"></div><div class="blue" style="left:1813px;top:608.5px;width:52px;height:10px;background:linear-gradient(180deg,#f7f8fc,#dfe3f3)"></div><div class="blue" style="left:1868px;top:608.5px;width:52px;height:10px;background:linear-gradient(180deg,#f7f8fc,#e6e9f5)"></div><div class="abs lb" style="left:1813px;top:618.5px;width:26.5px;height:29.4px;background:#f0f0f0;border-top:1.5px solid #fff;border-left:1.5px solid #fff;border-right:2px solid #333;border-bottom:2px solid #333"></div><div class="abs" style="left:1816.2px;top:623.7px;width:20.6px;height:20.6px;border-radius:50%;border:1.5px solid #111"></div><div class="abs lt" style="left:1816.5px;top:623.0px;width:20px;height:22px;line-height:22px;text-align:center;font-size:15.5px;font-family:'Liberation Sans',sans-serif">0</div><div class="abs" style="left:1816px;top:621.0px;width:11px;height:2.8px;background:#d800d8"></div><div class="abs lb" style="left:1839.5px;top:618.5px;width:26.5px;height:29.4px;background:#f0f0f0;border-top:1.5px solid #fff;border-left:1.5px solid #fff;border-right:2px solid #333;border-bottom:2px solid #333"></div><div class="abs" style="left:1842.7px;top:623.7px;width:20.6px;height:20.6px;border-radius:50%;border:1.5px solid #111"></div><div class="abs lt" style="left:1843.0px;top:623.0px;width:20px;height:22px;line-height:22px;text-align:center;font-size:15.5px;font-family:'Liberation Sans',sans-serif">8</div><div class="abs lb" style="left:1868px;top:618.5px;width:26.5px;height:29.4px;background:#f0f0f0;border-top:2.5px solid #111;border-left:2.5px solid #111;border-right:1px solid #fff;border-bottom:1px solid #fff"></div><div class="abs" style="left:1872px;top:623.5px;width:21px;height:23px;border:1.5px solid #f00000;border-top:4px solid #f00000;background:#f4f4f4"></div><div class="abs lt" style="left:1872px;top:624.5px;width:21px;height:22px;line-height:22px;text-align:center;font-size:15.5px;font-family:'Liberation Sans',sans-serif">0</div><div class="abs lb" style="left:1894.5px;top:618.5px;width:26.5px;height:29.4px;background:#f0f0f0;border-top:1.5px solid #fff;border-left:1.5px solid #fff;border-right:2px solid #333;border-bottom:2px solid #333"></div><div class="abs" style="left:1897.5px;top:624.5px;width:21px;height:20.5px;border:2px solid #111;border-top-width:1.5px;border-left-width:1.5px"></div><div class="abs lt" style="left:1897.5px;top:623.5px;width:21px;height:22px;line-height:22px;text-align:center;font-size:15.5px;font-family:'Liberation Sans',sans-serif">8</div><div class="abs lb" style="left:1813px;top:647.9px;width:26.5px;height:29.4px;background:#f0f0f0;border-top:1.5px solid #fff;border-left:1.5px solid #fff;border-right:2px solid #333;border-bottom:2px solid #333"></div><div class="abs" style="left:1816.2px;top:653.1px;width:20.6px;height:20.6px;border-radius:50%;border:1.5px solid #111"></div><div class="abs lt" style="left:1816.5px;top:652.4px;width:20px;height:22px;line-height:22px;text-align:center;font-size:15.5px;font-family:'Liberation Sans',sans-serif">1</div><div class="abs" style="left:1816px;top:650.4px;width:21px;height:2.8px;background:#d800d8"></div><div class="abs lb" style="left:1839.5px;top:647.9px;width:26.5px;height:29.4px;background:#f0f0f0;border-top:1.5px solid #fff;border-left:1.5px solid #fff;border-right:2px solid #333;border-bottom:2px solid #333"></div><div class="abs" style="left:1842.7px;top:653.1px;width:20.6px;height:20.6px;border-radius:50%;border:1.5px solid #111"></div><div class="abs lt" style="left:1843.0px;top:652.4px;width:20px;height:22px;line-height:22px;text-align:center;font-size:15.5px;font-family:'Liberation Sans',sans-serif">9</div><div class="abs lb" style="left:1868px;top:647.9px;width:26.5px;height:29.4px;background:#f0f0f0;border-top:1.5px solid #fff;border-left:1.5px solid #fff;border-right:2px solid #333;border-bottom:2px solid #333"></div><div class="abs" style="left:1871px;top:653.9px;width:21px;height:20.5px;border:2px solid #111;border-top-width:1.5px;border-left-width:1.5px"></div><div class="abs lt" style="left:1871px;top:652.9px;width:21px;height:22px;line-height:22px;text-align:center;font-size:15.5px;font-family:'Liberation Sans',sans-serif">1</div><div class="abs lb" style="left:1894.5px;top:647.9px;width:26.5px;height:29.4px;background:#f0f0f0;border-top:1.5px solid #fff;border-left:1.5px solid #fff;border-right:2px solid #333;border-bottom:2px solid #333"></div><div class="abs" style="left:1897.5px;top:653.9px;width:21px;height:20.5px;border:2px solid #111;border-top-width:1.5px;border-left-width:1.5px"></div><div class="abs lt" style="left:1897.5px;top:652.9px;width:21px;height:22px;line-height:22px;text-align:center;font-size:15.5px;font-family:'Liberation Sans',sans-serif">9</div><div class="abs lb" style="left:1813px;top:677.3px;width:26.5px;height:29.4px;background:#f0f0f0;border-top:1.5px solid #fff;border-left:1.5px solid #fff;border-right:2px solid #333;border-bottom:2px solid #333"></div><div class="abs" style="left:1816.2px;top:682.5px;width:20.6px;height:20.6px;border-radius:50%;border:1.5px solid #111"></div><div class="abs lt" style="left:1816.5px;top:681.8px;width:20px;height:22px;line-height:22px;text-align:center;font-size:15.5px;font-family:'Liberation Sans',sans-serif">2</div><div class="abs" style="left:1816px;top:679.8px;width:21px;height:2.8px;background:#d800d8"></div><div class="abs lb" style="left:1839.5px;top:677.3px;width:26.5px;height:29.4px;background:#f0f0f0;border-top:1.5px solid #fff;border-left:1.5px solid #fff;border-right:2px solid #333;border-bottom:2px solid #333"></div><div class="abs" style="left:1842.7px;top:682.5px;width:20.6px;height:20.6px;border-radius:50%;border:1.5px solid #111"></div><div class="abs lt" style="left:1843.0px;top:681.8px;width:20px;height:22px;line-height:22px;text-align:center;font-size:15.5px;font-family:'Liberation Serif',serif">A</div><div class="abs lb" style="left:1868px;top:677.3px;width:26.5px;height:29.4px;background:#f0f0f0;border-top:1.5px solid #fff;border-left:1.5px solid #fff;border-right:2px solid #333;border-bottom:2px solid #333"></div><div class="abs" style="left:1871px;top:683.3px;width:21px;height:20.5px;border:2px solid #111;border-top-width:1.5px;border-left-width:1.5px"></div><div class="abs lt" style="left:1871px;top:682.3px;width:21px;height:22px;line-height:22px;text-align:center;font-size:15.5px;font-family:'Liberation Sans',sans-serif">2</div><div class="abs lb" style="left:1894.5px;top:677.3px;width:26.5px;height:29.4px;background:#f0f0f0;border-top:1.5px solid #fff;border-left:1.5px solid #fff;border-right:2px solid #333;border-bottom:2px solid #333"></div><div class="abs" style="left:1897.5px;top:683.3px;width:21px;height:20.5px;border:2px solid #111;border-top-width:1.5px;border-left-width:1.5px"></div><div class="abs lt" style="left:1897.5px;top:682.3px;width:21px;height:22px;line-height:22px;text-align:center;font-size:15.5px;font-family:'Liberation Serif',serif">A</div><div class="abs lb" style="left:1813px;top:706.7px;width:26.5px;height:29.4px;background:#f0f0f0;border-top:2.5px solid #111;border-left:2.5px solid #111;border-right:1px solid #fff;border-bottom:1px solid #fff"></div><div class="abs" style="left:1817.2px;top:712.9000000000001px;width:20.6px;height:20.6px;border-radius:50%;border:1.5px solid #f00000"></div><div class="abs lt" style="left:1817.5px;top:712.2px;width:20px;height:22px;line-height:22px;text-align:center;font-size:15.5px;font-family:'Liberation Sans',sans-serif">3</div><div class="abs" style="left:1817px;top:710.2px;width:11px;height:2.8px;background:#f00000"></div><div class="abs lb" style="left:1839.5px;top:706.7px;width:26.5px;height:29.4px;background:#f0f0f0;border-top:1.5px solid #fff;border-left:1.5px solid #fff;border-right:2px solid #333;border-bottom:2px solid #333"></div><div class="abs" style="left:1842.7px;top:711.9000000000001px;width:20.6px;height:20.6px;border-radius:50%;border:1.5px solid #111"></div><div class="abs lt" style="left:1843.0px;top:711.2px;width:20px;height:22px;line-height:22px;text-align:center;font-size:15.5px;font-family:'Liberation Serif',serif">B</div><div class="abs lb" style="left:1868px;top:706.7px;width:26.5px;height:29.4px;background:#f0f0f0;border-top:1.5px solid #fff;border-left:1.5px solid #fff;border-right:2px solid #333;border-bottom:2px solid #333"></div><div class="abs" style="left:1871px;top:712.7px;width:21px;height:20.5px;border:2px solid #111;border-top-width:1.5px;border-left-width:1.5px"></div><div class="abs lt" style="left:1871px;top:711.7px;width:21px;height:22px;line-height:22px;text-align:center;font-size:15.5px;font-family:'Liberation Sans',sans-serif">3</div><div class="abs lb" style="left:1894.5px;top:706.7px;width:26.5px;height:29.4px;background:#f0f0f0;border-top:1.5px solid #fff;border-left:1.5px solid #fff;border-right:2px solid #333;border-bottom:2px solid #333"></div><div class="abs" style="left:1897.5px;top:712.7px;width:21px;height:20.5px;border:2px solid #111;border-top-width:1.5px;border-left-width:1.5px"></div><div class="abs lt" style="left:1897.5px;top:711.7px;width:21px;height:22px;line-height:22px;text-align:center;font-size:15.5px;font-family:'Liberation Serif',serif">B</div><div class="abs lb" style="left:1813px;top:736.1px;width:26.5px;height:29.4px;background:#f0f0f0;border-top:1.5px solid #fff;border-left:1.5px solid #fff;border-right:2px solid #333;border-bottom:2px solid #333"></div><div class="abs" style="left:1816.2px;top:741.3000000000001px;width:20.6px;height:20.6px;border-radius:50%;border:1.5px solid #111"></div><div class="abs lt" style="left:1816.5px;top:740.6px;width:20px;height:22px;line-height:22px;text-align:center;font-size:15.5px;font-family:'Liberation Sans',sans-serif">4</div><div class="abs" style="left:1816px;top:738.6px;width:11px;height:2.8px;background:#d800d8"></div><div class="abs lb" style="left:1839.5px;top:736.1px;width:26.5px;height:29.4px;background:#f0f0f0;border-top:1.5px solid #fff;border-left:1.5px solid #fff;border-right:2px solid #333;border-bottom:2px solid #333"></div><div class="abs" style="left:1842.7px;top:741.3000000000001px;width:20.6px;height:20.6px;border-radius:50%;border:1.5px solid #111"></div><div class="abs lt" style="left:1843.0px;top:740.6px;width:20px;height:22px;line-height:22px;text-align:center;font-size:15.5px;font-family:'Liberation Serif',serif">C</div><div class="abs lb" style="left:1868px;top:736.1px;width:26.5px;height:29.4px;background:#f0f0f0;border-top:1.5px solid #fff;border-left:1.5px solid #fff;border-right:2px solid #333;border-bottom:2px solid #333"></div><div class="abs" style="left:1871px;top:742.1px;width:21px;height:20.5px;border:2px solid #111;border-top-width:1.5px;border-left-width:1.5px"></div><div class="abs lt" style="left:1871px;top:741.1px;width:21px;height:22px;line-height:22px;text-align:center;font-size:15.5px;font-family:'Liberation Sans',sans-serif">4</div><div class="abs lb" style="left:1894.5px;top:736.1px;width:26.5px;height:29.4px;background:#f0f0f0;border-top:1.5px solid #fff;border-left:1.5px solid #fff;border-right:2px solid #333;border-bottom:2px solid #333"></div><div class="abs" style="left:1897.5px;top:742.1px;width:21px;height:20.5px;border:2px solid #111;border-top-width:1.5px;border-left-width:1.5px"></div><div class="abs lt" style="left:1897.5px;top:741.1px;width:21px;height:22px;line-height:22px;text-align:center;font-size:15.5px;font-family:'Liberation Serif',serif">C</div><div class="abs lb" style="left:1813px;top:765.5px;width:26.5px;height:29.4px;background:#f0f0f0;border-top:1.5px solid #fff;border-left:1.5px solid #fff;border-right:2px solid #333;border-bottom:2px solid #333"></div><div class="abs" style="left:1816.2px;top:770.7px;width:20.6px;height:20.6px;border-radius:50%;border:1.5px solid #111"></div><div class="abs lt" style="left:1816.5px;top:770.0px;width:20px;height:22px;line-height:22px;text-align:center;font-size:15.5px;font-family:'Liberation Sans',sans-serif">5</div><div class="abs" style="left:1816px;top:768.0px;width:11px;height:2.8px;background:#d800d8"></div><div class="abs lb" style="left:1839.5px;top:765.5px;width:26.5px;height:29.4px;background:#f0f0f0;border-top:1.5px solid #fff;border-left:1.5px solid #fff;border-right:2px solid #333;border-bottom:2px solid #333"></div><div class="abs" style="left:1842.7px;top:770.7px;width:20.6px;height:20.6px;border-radius:50%;border:1.5px solid #111"></div><div class="abs lt" style="left:1843.0px;top:770.0px;width:20px;height:22px;line-height:22px;text-align:center;font-size:15.5px;font-family:'Liberation Serif',serif">D</div><div class="abs lb" style="left:1868px;top:765.5px;width:26.5px;height:29.4px;background:#f0f0f0;border-top:1.5px solid #fff;border-left:1.5px solid #fff;border-right:2px solid #333;border-bottom:2px solid #333"></div><div class="abs" style="left:1871px;top:771.5px;width:21px;height:20.5px;border:2px solid #111;border-top-width:1.5px;border-left-width:1.5px"></div><div class="abs lt" style="left:1871px;top:770.5px;width:21px;height:22px;line-height:22px;text-align:center;font-size:15.5px;font-family:'Liberation Sans',sans-serif">5</div><div class="abs lb" style="left:1894.5px;top:765.5px;width:26.5px;height:29.4px;background:#f0f0f0;border-top:1.5px solid #fff;border-left:1.5px solid #fff;border-right:2px solid #333;border-bottom:2px solid #333"></div><div class="abs" style="left:1897.5px;top:771.5px;width:21px;height:20.5px;border:2px solid #111;border-top-width:1.5px;border-left-width:1.5px"></div><div class="abs lt" style="left:1897.5px;top:770.5px;width:21px;height:22px;line-height:22px;text-align:center;font-size:15.5px;font-family:'Liberation Serif',serif">D</div><div class="abs lb" style="left:1813px;top:794.9px;width:26.5px;height:29.4px;background:#f0f0f0;border-top:1.5px solid #fff;border-left:1.5px solid #fff;border-right:2px solid #333;border-bottom:2px solid #333"></div><div class="abs" style="left:1816.2px;top:800.1px;width:20.6px;height:20.6px;border-radius:50%;border:1.5px solid #111"></div><div class="abs lt" style="left:1816.5px;top:799.4px;width:20px;height:22px;line-height:22px;text-align:center;font-size:15.5px;font-family:'Liberation Sans',sans-serif">6</div><div class="abs" style="left:1816px;top:797.4px;width:11px;height:2.8px;background:#d800d8"></div><div class="abs lb" style="left:1839.5px;top:794.9px;width:26.5px;height:29.4px;background:#f0f0f0;border-top:1.5px solid #fff;border-left:1.5px solid #fff;border-right:2px solid #333;border-bottom:2px solid #333"></div><div class="abs" style="left:1842.7px;top:800.1px;width:20.6px;height:20.6px;border-radius:50%;border:1.5px solid #111"></div><div class="abs lt" style="left:1843.0px;top:799.4px;width:20px;height:22px;line-height:22px;text-align:center;font-size:15.5px;font-family:'Liberation Serif',serif">E</div><div class="abs lb" style="left:1868px;top:794.9px;width:26.5px;height:29.4px;background:#f0f0f0;border-top:1.5px solid #fff;border-left:1.5px solid #fff;border-right:2px solid #333;border-bottom:2px solid #333"></div><div class="abs" style="left:1871px;top:800.9px;width:21px;height:20.5px;border:2px solid #111;border-top-width:1.5px;border-left-width:1.5px"></div><div class="abs lt" style="left:1871px;top:799.9px;width:21px;height:22px;line-height:22px;text-align:center;font-size:15.5px;font-family:'Liberation Sans',sans-serif">6</div><div class="abs lb" style="left:1894.5px;top:794.9px;width:26.5px;height:29.4px;background:#f0f0f0;border-top:1.5px solid #fff;border-left:1.5px solid #fff;border-right:2px solid #333;border-bottom:2px solid #333"></div><div class="abs" style="left:1897.5px;top:800.9px;width:21px;height:20.5px;border:2px solid #111;border-top-width:1.5px;border-left-width:1.5px"></div><div class="abs lt" style="left:1897.5px;top:799.9px;width:21px;height:22px;line-height:22px;text-align:center;font-size:15.5px;font-family:'Liberation Serif',serif">E</div><div class="abs lb" style="left:1813px;top:824.3px;width:26.5px;height:29.4px;background:#f0f0f0;border-top:1.5px solid #fff;border-left:1.5px solid #fff;border-right:2px solid #333;border-bottom:2px solid #333"></div><div class="abs" style="left:1816.2px;top:829.5px;width:20.6px;height:20.6px;border-radius:50%;border:1.5px solid #111"></div><div class="abs lt" style="left:1816.5px;top:828.8px;width:20px;height:22px;line-height:22px;text-align:center;font-size:15.5px;font-family:'Liberation Sans',sans-serif">7</div><div class="abs" style="left:1816px;top:826.8px;width:11px;height:2.8px;background:#d800d8"></div><div class="abs lb" style="left:1839.5px;top:824.3px;width:26.5px;height:29.4px;background:#f0f0f0;border-top:1.5px solid #fff;border-left:1.5px solid #fff;border-right:2px solid #333;border-bottom:2px solid #333"></div><div class="abs" style="left:1842.7px;top:829.5px;width:20.6px;height:20.6px;border-radius:50%;border:1.5px solid #111"></div><div class="abs lt" style="left:1843.0px;top:828.8px;width:20px;height:22px;line-height:22px;text-align:center;font-size:15.5px;font-family:'Liberation Serif',serif">F</div><div class="abs lb" style="left:1868px;top:824.3px;width:26.5px;height:29.4px;background:#f0f0f0;border-top:1.5px solid #fff;border-left:1.5px solid #fff;border-right:2px solid #333;border-bottom:2px solid #333"></div><div class="abs" style="left:1871px;top:830.3px;width:21px;height:20.5px;border:2px solid #111;border-top-width:1.5px;border-left-width:1.5px"></div><div class="abs lt" style="left:1871px;top:829.3px;width:21px;height:22px;line-height:22px;text-align:center;font-size:15.5px;font-family:'Liberation Sans',sans-serif">7</div><div class="abs lb" style="left:1894.5px;top:824.3px;width:26.5px;height:29.4px;background:#f0f0f0;border-top:1.5px solid #fff;border-left:1.5px solid #fff;border-right:2px solid #333;border-bottom:2px solid #333"></div><div class="abs" style="left:1897.5px;top:830.3px;width:21px;height:20.5px;border:2px solid #111;border-top-width:1.5px;border-left-width:1.5px"></div><div class="abs lt" style="left:1897.5px;top:829.3px;width:21px;height:22px;line-height:22px;text-align:center;font-size:15.5px;font-family:'Liberation Serif',serif">F</div><div class="blue" style="left:1813px;top:854.5px;width:52px;height:69px;background:linear-gradient(180deg,#d4d9ec 0%,#d0d6ea 50%,#dfe3f3 100%)"></div><div class="blue" style="left:1868px;top:854.5px;width:52px;height:69px;background:linear-gradient(180deg,#d4d9ec 0%,#d0d6ea 50%,#dfe3f3 100%)"></div><div class="vsep" style="left:1865px;top:854px;height:70px"></div><div class="b " style="left:1821.5px;top:857.5px;width:35px;height:28.5px;font-size:23px;-webkit-text-stroke:0;padding-top:0;"><span class="f" style="transform:scaleX(0.900)">All</span></div><div class="b " style="left:1876.5px;top:857.5px;width:35px;height:28.5px;font-size:23px;-webkit-text-stroke:0;padding-top:0;"><span class="f" style="transform:scaleX(0.900)">All</span></div><div class="b " style="left:1821.5px;top:889.5px;width:35px;height:29.5px;font-size:23px;-webkit-text-stroke:0;padding-top:0;"><span class="f" style="transform:scaleX(0.781)">0</span></div><div class="b " style="left:1876.5px;top:889.5px;width:35px;height:29.5px;-webkit-text-stroke:0;padding-top:0;"><svg width="31" height="25" viewBox="0 0 31 25" style="display:block"><text x="15.5" y="18.6" text-anchor="middle" font-family="DejaVu Sans,Liberation Sans,sans-serif" font-size="16.5" fill="#111" textLength="21" lengthAdjust="spacingAndGlyphs">╳</text></svg></div><div class="hsep" style="left:1813px;top:923.5px;width:107px"></div><div class="blue" style="left:1813px;top:926.5px;width:107px;height:66px;background:linear-gradient(180deg,#d4d9ec 0%,#d2d8eb 60%,#dde1f2 100%)"></div><div class="abs" style="left:1864px;top:926.5px;width:1.5px;height:66px;background:#e2e6f4"></div><div id="status" class="abs"><span class="f" style="transform:scaleX(0.871);left:8px">始点を指示してください　(L)free　(R)Read</span><div class="cell" style="left:1512.5px;width:49px"></div><span style="left:1516.5px">A-3</span><div class="cell" style="left:1565px;width:75.5px"></div><span style="left:1568.5px">S=1/50</span><div class="cell" style="left:1643px;width:125px"></div><span style="left:1647px">[0-3]躯体線</span><div class="cell" style="left:1772px;width:63px"></div><span style="left:1775.5px">∠0･</span><div class="cell" style="left:1839px;width:81px"></div><span style="left:1844px">× 0.46</span></div><div id="task" class="abs"><div class="abs" style="left:0;top:0;width:1920px;height:3px;background:linear-gradient(180deg,rgba(255,255,255,.25),rgba(255,255,255,0))"></div><div class="abs" style="left:171.500px;top:-.5px;width:82px;height:55px;border-radius:4px;border:1.5px solid #8a8c86;background:linear-gradient(135deg,#6d6f69 0%,#4a4c47 45%,#2c2e2a 55%,#3a3c38 100%)"></div><div class="abs" style="left:520px;top:-.5px;width:82px;height:55px;border-radius:4px;border:1.5px solid #f2f2f2;background:linear-gradient(90deg,#d8d8d6 0%,#9c9d99 22%,#8b8c88 50%,#9a9b97 78%,#c9c9c7 100%)"></div><svg class="abs" style="left:0;top:0" width="1920" height="56" viewBox="0 1023 1920 56"><defs>
<radialGradient id="orb" cx=".5" cy=".35" r=".75"><stop offset="0" stop-color="#5aa0d8"/><stop offset=".55" stop-color="#1e5f9e"/><stop offset=".85" stop-color="#0b3560"/><stop offset="1" stop-color="#21c0f0"/></radialGradient>
<radialGradient id="orbg" cx=".5" cy="1" r=".6"><stop offset="0" stop-color="#35d8ff" stop-opacity=".95"/><stop offset="1" stop-color="#35d8ff" stop-opacity="0"/></radialGradient>
<linearGradient id="ieg" x1="0" y1="0" x2="0" y2="1"><stop offset="0" stop-color="#7fd4ff"/><stop offset=".5" stop-color="#2aa3ee"/><stop offset="1" stop-color="#1675c9"/></linearGradient>
<linearGradient id="fold" x1="0" y1="0" x2="0" y2="1"><stop offset="0" stop-color="#fbeeb4"/><stop offset="1" stop-color="#edc96a"/></linearGradient>
<linearGradient id="vlc" x1="0" y1="0" x2="1" y2="0"><stop offset="0" stop-color="#ff9a1f"/><stop offset=".5" stop-color="#ff7a00"/><stop offset="1" stop-color="#e56400"/></linearGradient>
</defs><circle cx="38" cy="1051" r="26" fill="#10263c" stroke="#5f88a8" stroke-width="1.5"/><circle cx="38" cy="1051" r="24.5" fill="url(#orb)"/><ellipse cx="38" cy="1068" rx="18" ry="8" fill="url(#orbg)"/><path d="M30 1036 q6 -3 9 0 l-2.5 12 q-4 -2 -9 0z" fill="#f2652a"/><path d="M41 1037 q6 3 13 -1 l-3 12 q-6 3 -12 0z" fill="#8cc63f"/><path d="M26.5 1051 q5 -2.5 9.5 0 l-2.5 12 q-4.5 -2.5 -10 0z" fill="#3d9be0"/><path d="M38 1052 q6 3 12.5 0 l-3 12 q-6 3 -12 -0.5z" fill="#fdbb2f"/><text x="126.500" y="1070" text-anchor="middle" font-family="Liberation Sans,sans-serif" font-weight="bold" font-size="71" fill="url(#ieg)">e</text><ellipse cx="125" cy="1050" rx="26" ry="10" transform="rotate(-42 125 1050)" fill="none" stroke="#f6c21a" stroke-width="3.2" stroke-dasharray="92 40" stroke-dashoffset="-62"/><path d="M190 1066 V1037 q0 -3 3 -3 h13 l3 4 h22 q3 0 3 3 V1066z" fill="url(#fold)" stroke="#d9b55a" stroke-width="1"/><rect x="194" y="1031" width="5" height="3.5" fill="#18c430"/><rect x="206" y="1034" width="5" height="3.5" fill="#e03020"/><rect x="217" y="1037" width="5" height="3.5" fill="#2a8cf0"/><rect x="199.500" y="1031" width="12" height="3.500" fill="#fff" opacity=".9"/><rect x="211" y="1034" width="12" height="3.5" fill="#fff" opacity=".9"/><rect x="222" y="1037" width="10" height="3.5" fill="#fff" opacity=".9"/><path d="M195 1072 V1058 q0 -2 2 -2 h29 q2 0 2 2 V1072 h-7 v-9 h-19 v9z" fill="#8fd0f2" stroke="#5aa6d8" stroke-width="1" opacity=".95"/><path d="M280 1037 l30 -2 l6 1 v33 l-6 2 l-30 -2z" fill="#5d9dcc"/><path d="M280 1037 l30 -2 v36 l-30 -2z" fill="#86bde3"/><circle cx="295" cy="1052.500" r="12.500" fill="#f47a1f"/><circle cx="295" cy="1052.500" r="10.500" fill="#f9983a"/><path d="M291 1046 l11 6.500 l-11 6.500z" fill="#fff"/><circle cx="386.500" cy="1051" r="21.500" fill="#dd4b3e"/><path d="M386.500 1051 L368 1040.500 A21.500 21.500 0 0 0 386.500 1072.500 L396 1056z" fill="#1da462"/><path d="M386.500 1051 L386 1072.500 A21.500 21.500 0 0 0 405.300 1040.500 L386.500 1040.500z" fill="#ffcd46"/><path d="M368 1040.300 A21.500 21.500 0 0 1 405.300 1040.500 L386.500 1040.500 L377 1056z" fill="#dd4b3e"/><circle cx="386.500" cy="1051" r="10" fill="#fff"/><circle cx="386.500" cy="1051" r="8" fill="#4a8af4"/><path d="M473.500 1028 q-3 0 -4 3 l-13 34 h34 l-13 -34 q-1 -3 -4 -3z" fill="url(#vlc)"/><path d="M466.200 1039 h14.600 l2.200 6 h-19z" fill="#e8e8e8"/><path d="M462.500 1049 h22 l2.300 6.500 h-26.600z" fill="#e0e0e0"/><path d="M456 1063 h35 l2 6 q0 2.500 -2.500 2.500 h-34 q-2.500 0 -2.500 -2.500z" fill="#ff8c10"/><rect x="538" y="1028" width="45.500" height="45" fill="#000"/><rect x="542.500" y="1032.500" width="41" height="40.500" fill="#0000f0"/><text x="538" y="1058" font-family="Liberation Serif,serif" font-style="italic" font-weight="bold" font-size="28" fill="#f8f000" textLength="44" lengthAdjust="spacingAndGlyphs">Jww</text><g transform="translate(0,-2.5)"><rect x="1314" y="1038" width="23" height="23" rx="4" fill="#e8323c" stroke="#f7b0b0" stroke-width="1.5"/><path d="M1319 1049 q5 -8 12 -3 q3 5 -3 9 q-5 2 -7 -3 M1324 1051 l3 3 l6 -8" fill="none" stroke="#fff" stroke-width="1.8"/><text x="1352" y="1059" font-family="Liberation Sans,sans-serif" font-size="24" fill="#f4f4f4" textLength="13" lengthAdjust="spacingAndGlyphs">A</text><text x="1370" y="1059" font-family="IPAGothic,Noto Sans CJK JP,sans-serif" font-size="25" fill="#f4f4f4">般</text><path d="M1400 1049 h19 l-2 11 h-15z" fill="#f0b050"/><path d="M1400 1046 h19 v4 h-19z" fill="#f8d890"/><path d="M1403 1046 l4 -6 l3 4 l4 -5 l2 7z" fill="#d04040"/><circle cx="1414" cy="1044" r="3" fill="#60b0e0"/><path d="M1429 1050 l8 -4 l10 6 l-8 6z" fill="#e8eef8"/><path d="M1434 1054 l4 5 l9 -14" fill="none" stroke="#40b040" stroke-width="3"/><path d="M1430 1050 l8 -8" stroke="#3870c8" stroke-width="3"/><rect x="1457" y="1042" width="13" height="11" fill="#dfe8f4"/><circle cx="1470" cy="1052" r="5.500" fill="#9ccbea" stroke="#3a78b8" stroke-width="2"/><path d="M1474 1056 l4 4" stroke="#3a78b8" stroke-width="3"/><path d="M1482 1050 l11 -6 l12 5 v8 l-11 6 l-12 -5z" fill="#f0b04c"/><path d="M1482 1050 l12 5 l11 -6" fill="none" stroke="#c88020" stroke-width="1.2"/><path d="M1488 1046 q5 -5 10 0" fill="none" stroke="#d8d8d8" stroke-width="2"/><circle cx="1525" cy="1049" r="10" fill="#1828c0" stroke="#c8d0f0" stroke-width="1.5"/><text x="1525" y="1055.500" text-anchor="middle" font-family="Liberation Sans,sans-serif" font-weight="bold" font-size="17" fill="#fff">?</text><text x="1547" y="1043" font-family="Liberation Sans,sans-serif" font-weight="bold" font-size="10.500" fill="#f0f0f0" textLength="28" lengthAdjust="spacingAndGlyphs">CAPS</text><text x="1547" y="1060" font-family="Liberation Sans,sans-serif" font-weight="bold" font-size="10.500" fill="#f0f0f0" textLength="28" lengthAdjust="spacingAndGlyphs">KANA</text><path d="M1586 1038.500 h9 v5 h-9z M1584 1041 h8 v4.500 h-8z" fill="none" stroke="#f0f0f0" stroke-width="1.400"/><path d="M1585.500 1054 h8 l-4 4z" fill="#f0f0f0"/><path d="M1610.500 1056 h10 l-5 -5.500z" fill="#f4f4f4"/><path d="M1641 1043 v21" stroke="#e8e8e8" stroke-width="2"/><path d="M1642 1043 q5 -2 8 1 q4 2 8 0 v10 q-4 2 -8 0 q-4 -2 -8 0z" fill="#f0f0f0"/><circle cx="1654" cy="1058" r="6" fill="#e02020" stroke="#fff" stroke-width="1"/><path d="M1651 1055 l6 6 M1657 1055 l-6 6" stroke="#fff" stroke-width="1.800"/><rect x="1675" y="1044" width="10" height="19" rx="1.500" fill="none" stroke="#e8e8e8" stroke-width="1.500"/><path d="M1682 1042 v5 M1689 1042 v5 M1679.500 1047 h12 v5 q-2 4 -6 4 q-4 0 -6 -4z M1685.500 1056 v5" stroke="#f4f4f4" stroke-width="2" fill="#f4f4f4"/><path d="M1674 1054 l9 9 M1683 1054 l-9 9" stroke="#e01010" stroke-width="2.600"/><rect x="1707.0" y="1057.0" width="3.200" height="3.0" fill="#f4f4f4"/><rect x="1711.4" y="1053.4" width="3.200" height="6.6" fill="#f4f4f4"/><rect x="1715.8" y="1049.8" width="3.200" height="10.2" fill="#f4f4f4"/><rect x="1720.2" y="1046.2" width="3.200" height="13.8" fill="#f4f4f4"/><rect x="1724.6" y="1042.6" width="3.200" height="17.4" fill="#f4f4f4"/><path d="M1740 1047 h4 l6 -6 v21 l-6 -6 h-4z" fill="#f4f4f4"/><path d="M1754 1046 q4 5.500 0 11 M1757.500 1043 q6 8.500 0 17" fill="none" stroke="#e8e8e8" stroke-width="1.500"/></g><text x="1836.5" y="1045.5" text-anchor="middle" font-family="Liberation Sans,sans-serif" font-size="18.5" fill="#fff" textLength="45.5" lengthAdjust="spacingAndGlyphs">12:48</text><text x="1836" y="1070" text-anchor="middle" font-family="Liberation Sans,sans-serif" font-size="18.5" fill="#fff" textLength="92" lengthAdjust="spacingAndGlyphs">2019/07/06</text><rect x="1901" y="1024.500" width="19" height="54" fill="#3d4238" stroke="#7a7d76" stroke-width="1.500"/><path d="M1902 1025 h18 v22 q-9 -6 -18 2z" fill="#75786f" opacity=".7"/></svg></div></body></html>
